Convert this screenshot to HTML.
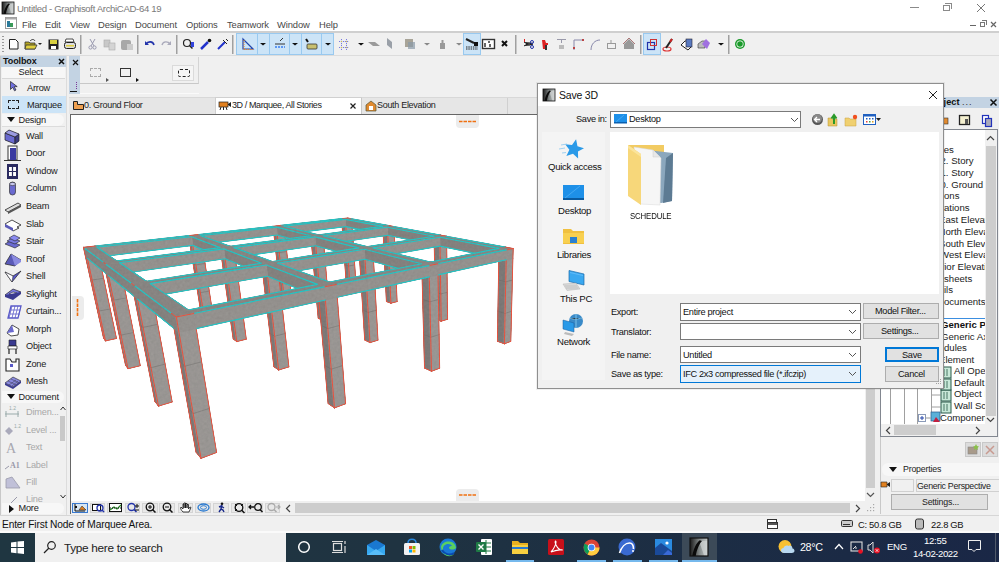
<!DOCTYPE html>
<html><head><meta charset="utf-8">
<style>
*{box-sizing:border-box;margin:0;padding:0}
html,body{width:999px;height:562px;overflow:hidden;background:#f0f0f0;font-family:"Liberation Sans",sans-serif;font-size:11px;color:#000;position:relative}
.a{position:absolute}
.t{position:absolute;white-space:nowrap;line-height:1}
svg{overflow:visible}
</style></head><body>
<!-- title bar -->
<div class="a" style="left:0;top:0;width:999px;height:16px;background:#fff"></div>
<svg class="a" style="left:2px;top:2px" width="12" height="12" viewBox="0 0 12 12"><defs><linearGradient id="LGt" x1="0" x2="1"><stop offset="0" stop-color="#1a1a1a"/><stop offset=".55" stop-color="#8a9090"/><stop offset="1" stop-color="#c8cccc"/></linearGradient></defs><rect width="12" height="12" fill="url(#LGt)"/><path d="M6 2 L9.5 12 L12 12 L12 2Z" fill="#d8dcdc" opacity=".6"/><path d="M1.5 12 C2.5 7 4 3.5 6.5 1.5 L8 2 C6 4 4.5 8 3.8 12Z" fill="#0a0a0a"/><rect width="12" height="12" fill="none" stroke="#111" stroke-width=".8"/></svg>
<div class="t" style="left:17px;top:4px;font-size:9.6px;color:#7a7a7a;letter-spacing:-0.35px">Untitled - Graphisoft ArchiCAD-64 19</div>
<div class="a" style="left:910px;top:7px;width:9px;height:1px;background:#8a8a8a"></div>
<div class="a" style="left:943px;top:5px;width:7px;height:6px;border:1px solid #8a8a8a"></div>
<div class="a" style="left:945px;top:3px;width:7px;height:6px;border-top:1px solid #8a8a8a;border-right:1px solid #8a8a8a"></div>
<svg class="a" style="left:976px;top:3px" width="10" height="10"><path d="M1 1L9 9M9 1L1 9" stroke="#777" stroke-width="1"/></svg>
<!-- menu bar -->
<div class="a" style="left:0;top:16px;width:999px;height:16px;background:#fff"></div>
<svg class="a" style="left:5px;top:17px" width="12" height="12"><rect x="0.5" y="0.5" width="11" height="11" fill="#fff" stroke="#999"/><rect x="0.5" y="0.5" width="11" height="2" fill="#aaa"/><rect x="2" y="4" width="3" height="6" fill="#2b7a9a"/><rect x="5" y="6" width="3" height="4" fill="#3a9a5a"/></svg>
<div class="t" style="left:22px;top:19.5px;font-size:9.4px;color:#484848;letter-spacing:-0.1px">File</div>
<div class="t" style="left:45px;top:19.5px;font-size:9.4px;color:#484848;letter-spacing:-0.1px">Edit</div>
<div class="t" style="left:70px;top:19.5px;font-size:9.4px;color:#484848;letter-spacing:-0.1px">View</div>
<div class="t" style="left:98px;top:19.5px;font-size:9.4px;color:#484848;letter-spacing:-0.1px">Design</div>
<div class="t" style="left:135px;top:19.5px;font-size:9.4px;color:#484848;letter-spacing:-0.1px">Document</div>
<div class="t" style="left:186px;top:19.5px;font-size:9.4px;color:#484848;letter-spacing:-0.1px">Options</div>
<div class="t" style="left:227px;top:19.5px;font-size:9.4px;color:#484848;letter-spacing:-0.1px">Teamwork</div>
<div class="t" style="left:277px;top:19.5px;font-size:9.4px;color:#484848;letter-spacing:-0.1px">Window</div>
<div class="t" style="left:319px;top:19.5px;font-size:9.4px;color:#484848;letter-spacing:-0.1px">Help</div>
<div class="a" style="left:970px;top:25px;width:6px;height:1px;background:#666"></div>
<div class="a" style="left:980px;top:22px;width:5px;height:5px;border:1px solid #777"></div>
<div class="a" style="left:982px;top:20px;width:5px;height:5px;border-top:1px solid #777;border-right:1px solid #777"></div>
<svg class="a" style="left:990px;top:21px" width="7" height="7"><path d="M1 1L6 6M6 1L1 6" stroke="#666" stroke-width="1.2"/></svg>
<div class="a" style="left:0;top:31px;width:999px;height:2px;background:#cfcfcf"></div>
<svg class="a" style="left:0;top:33px" width="760" height="22" viewBox="0 33 760 22">
<g fill="#9a9a9a"><rect x="2" y="36" width="2" height="1"/><rect x="2" y="39" width="2" height="1"/><rect x="2" y="42" width="2" height="1"/><rect x="2" y="45" width="2" height="1"/><rect x="2" y="48" width="2" height="1"/><rect x="2" y="51" width="2" height="1"/></g>
<!-- new -->
<path d="M9.5 39.5h6l2.5 2.5v7h-8.5z" fill="#fff" stroke="#222"/>
<!-- open -->
<path d="M25 42h4l1 1h5v6H25z" fill="#b5a520" stroke="#333" stroke-width=".8"/><path d="M26 45h11l-2 4H25z" fill="#e0d040" stroke="#333" stroke-width=".8"/><path d="M30 41c2-2 4-2 5 0" stroke="#333" fill="none"/><path d="M38 43h4l-2 2z" fill="#222"/>
<!-- save -->
<rect x="48.5" y="39.5" width="10" height="10" fill="#222"/><rect x="50" y="40" width="7" height="4" fill="#d8d040"/><rect x="51" y="46" width="5" height="3" fill="#fff"/>
<!-- print -->
<path d="M66 39h7l1 3h-9z" fill="#fff" stroke="#222" stroke-width=".8"/><rect x="64.5" y="42.5" width="11" height="6" rx="2" fill="#ddd" stroke="#222"/><rect x="66" y="45" width="8" height="1.5" fill="#e0d040"/>
<rect x="80" y="35" width="1.5" height="19" fill="#a0a0a0"/>
<!-- cut -->
<path d="M90 39l4 7M95 39l-4 7" stroke="#9a9ab0" stroke-width="1"/><circle cx="90.5" cy="47.5" r="1.6" fill="none" stroke="#9a9ab0"/><circle cx="94.5" cy="47.5" r="1.6" fill="none" stroke="#9a9ab0"/>
<!-- copy -->
<rect x="104" y="40" width="6" height="7" fill="#c8c8c8" stroke="#aaa" stroke-width=".6"/><rect x="109" y="43" width="6" height="7" fill="#d4d4d4" stroke="#aaa" stroke-width=".6"/>
<!-- paste -->
<rect x="121" y="40" width="10" height="10" rx="2" fill="#a8a8a8"/><rect x="127" y="44" width="6" height="6" fill="#ccc"/>
<rect x="137" y="35" width="1.5" height="19" fill="#a0a0a0"/>
<!-- undo redo -->
<path d="M146 44c2-3 7-3 8 1" stroke="#2233aa" stroke-width="1.6" fill="none"/><path d="M145 41v4h4z" fill="#2233aa"/>
<path d="M170 44c-2-3-7-3-8 1" stroke="#aab" stroke-width="1.4" fill="none"/><path d="M171 41v4h-4z" fill="#aab"/>
<rect x="176" y="35" width="1.5" height="19" fill="#a0a0a0"/>
<!-- zoom -->
<circle cx="187" cy="43" r="3.5" fill="none" stroke="#222" stroke-width="1.2"/><path d="M189.5 45.5l3 3" stroke="#222" stroke-width="1.5"/><rect x="191" y="42" width="3" height="5" fill="#3344dd"/>
<!-- eyedropper -->
<path d="M201 49l7-7" stroke="#2233cc" stroke-width="2.5"/><circle cx="209.5" cy="40.5" r="1.8" fill="#111"/>
<path d="M218 49l7-7" stroke="#2233cc" stroke-width="2"/><path d="M223 40l4 4M226 39l2 2" stroke="#222" stroke-width="1"/>
<rect x="232" y="35" width="1.5" height="19" fill="#a0a0a0"/>
<!-- highlighted group -->
<rect x="236.5" y="33.5" width="97" height="21" fill="#cce4f7" stroke="#99c9ef"/>
<path d="M257.5 34v20M269.5 34v20M289.5 34v20M301.5 34v20M321.5 34v20" stroke="#99c9ef"/>
<path d="M243 39v10h10z" fill="none" stroke="#2244aa" stroke-width="1.2"/><path d="M244 40v9" stroke="#ee8822" stroke-dasharray="1 1"/><path d="M244 49.5h10" stroke="#ee8822" stroke-dasharray="1 1"/>
<path d="M260 43h6l-3 2.5z" fill="#111"/>
<path d="M275 44h10M280 41l3-3" stroke="#333"/><path d="M275 47h10" stroke="#3a7ef0" stroke-width="1.3" stroke-dasharray="2 1"/>
<path d="M292 43h6l-3 2.5z" fill="#111"/>
<path d="M306 39l2 3" stroke="#111" stroke-width="2"/><rect x="307" y="44" width="10" height="5" rx="1" fill="#c8c070" stroke="#333" stroke-width=".8"/>
<path d="M325 43h6l-3 2.5z" fill="#111"/>
<!-- grid -->
<path d="M341.5 39v11M346.5 39v11M339 41.5h10M339 47.5h10" stroke="#7a7ae0" stroke-width="1" stroke-dasharray="1.2 .8"/><g fill="#d8c840"><rect x="341" y="41" width="1" height="1"/><rect x="346" y="41" width="1" height="1"/><rect x="341" y="47" width="1" height="1"/><rect x="346" y="47" width="1" height="1"/></g>
<path d="M358 43h6l-3 2.5z" fill="#111"/>
<path d="M368 42h7l5 4h-7z" fill="#9a9a9a"/>
<path d="M387 38l5 4v7l-5-4z" fill="#9aa0a8"/>
<rect x="405" y="39" width="8" height="8" fill="#a8a498"/><rect x="408" y="42" width="7" height="7" fill="#8a9aa8" opacity=".7"/>
<path d="M424 43h6l-3 2.5z" fill="#888"/>
<rect x="440" y="43" width="5" height="6" fill="#999"/><rect x="441.5" y="40" width="2" height="3" fill="#999"/>
<path d="M456 43h6l-3 2.5z" fill="#888"/>
<rect x="463.5" y="33.5" width="17" height="21" fill="#cce4f7" stroke="#99c9ef"/>
<path d="M466 39l8 4" stroke="#222" stroke-width="2"/><path d="M466 47h12M466 49h12" stroke="#222" stroke-dasharray="1.5 .8"/><rect x="474" y="42" width="4" height="4" fill="#111"/>
<!-- table -->
<rect x="482.5" y="39.5" width="12" height="9" fill="#fff" stroke="#333" stroke-width="1.4"/><path d="M485 43v4M488 42h2M490 44v3" stroke="#333" stroke-width="1.5"/>
<path d="M502 41l5 5M507 41l-5 5" stroke="#111" stroke-width="2"/>
<rect x="515" y="35" width="1.5" height="19" fill="#a0a0a0"/>
<path d="M524 46l5-3 4 2M524 42l5 3 4-2" stroke="#222" stroke-width="1"/><circle cx="532" cy="42" r="1.5" fill="none" stroke="#2233aa"/><circle cx="532" cy="47" r="1.5" fill="none" stroke="#2233aa"/><rect x="524" y="39" width="1" height="3" fill="#d22"/>
<path d="M542 40h3l1 3h2v2h-2v4h-3z" fill="#d22"/><rect x="545" y="45" width="2" height="5" fill="#333"/>
<path d="M557 39.5h9M561.5 40v3" stroke="#99a"/><rect x="559" y="45" width="5" height="4" fill="#bbb"/>
<path d="M574 50v-10h9" stroke="#88a" fill="none"/><rect x="573" y="47" width="2" height="2" fill="#b44"/><rect x="582" y="39" width="2" height="2" fill="#b44"/>
<path d="M591 50c0-6 4-10 9-10" stroke="#88a" fill="none"/>
<rect x="607.5" y="43.5" width="8" height="5" fill="none" stroke="#999"/><path d="M611 40v3" stroke="#999"/>
<path d="M624 44l5-5 5 5v5h-10z" fill="#999"/><path d="M623 44l6-6 6 6" stroke="#a77" fill="none"/>
<rect x="640" y="35" width="1.5" height="19" fill="#a0a0a0"/>
<rect x="643.5" y="33.5" width="17" height="21" fill="#cce4f7" stroke="#99c9ef"/>
<rect x="647.5" y="42.5" width="7" height="7" fill="none" stroke="#2233aa" stroke-width="1.2"/><rect x="650.5" y="39.5" width="6" height="6" fill="none" stroke="#c33"/>
<ellipse cx="667" cy="49" rx="4" ry="2" fill="none" stroke="#d33" stroke-width="1.2"/><path d="M666 48l6-9" stroke="#222" stroke-width="2"/><path d="M670 42l2-3" stroke="#c22" stroke-width="2"/>
<path d="M681 45l4-4h6v6l-3 3z" fill="#fff" stroke="#222"/><rect x="686" y="39" width="6" height="8" fill="#5a7ac0" stroke="#223" stroke-width=".6"/>
<path d="M698 44l4-3h3v7h-7z" fill="#bbb" stroke="#333" stroke-width=".6"/><path d="M702 44l4-5 4 4-3 6z" fill="#a070e0"/>
<path d="M718 43h6l-3 2.5z" fill="#111"/>
<rect x="728" y="35" width="1.5" height="19" fill="#a0a0a0"/>
<circle cx="740" cy="44" r="5" fill="#1a9a2a"/><circle cx="740" cy="44" r="3.5" fill="#fff"/><circle cx="740" cy="44" r="2.8" fill="#1a9a2a"/>
</svg>
<div class="a" style="left:0;top:55px;width:999px;height:1px;background:#dcdcdc"></div>
<div class="a" style="left:0;top:56px;width:66px;height:459px;background:#f0f0f0"></div>
<div class="a" style="left:0;top:56px;width:1px;height:459px;background:#c8c8c8"></div>
<div class="a" style="left:1px;top:56px;width:65px;height:11px;background:#c3d3e3"></div>
<div class="t" style="left:3px;top:57px;font-size:9px;font-weight:bold;color:#111;letter-spacing:-0.1px">Toolbox</div>
<svg class="a" style="left:58px;top:58px" width="7" height="7"><path d="M1 1L6 6M6 1L1 6" stroke="#111" stroke-width="1.5"/></svg>
<div class="a" style="left:2px;top:67px;width:63px;height:11px;background:#f7f7f7"></div>
<div class="t" style="left:18.5px;top:68px;font-size:9.2px;color:#222;letter-spacing:-0.2px">Select</div>
<div class="a" style="left:2px;top:78px;width:63px;height:1px;background:#d8d8d8"></div>
<svg class="a" style="left:10px;top:81px" width="8" height="11"><path d="M.5.5v8l2.2-2.2 1.8 3.5 1.5-.8-1.8-3.4h3z" fill="#7070e0" stroke="#222" stroke-width=".7"/></svg>
<div class="t" style="left:27px;top:84px;font-size:9.2px;color:#222;letter-spacing:-0.2px">Arrow</div>
<div class="a" style="left:2px;top:96px;width:64px;height:17px;background:#cce4f7"></div>
<div class="a" style="left:8px;top:100px;width:11px;height:9px;border:1.3px dashed #222"></div>
<div class="t" style="left:27px;top:101px;font-size:9.2px;color:#222;letter-spacing:-0.2px">Marquee</div>
<div class="a" style="left:2px;top:114px;width:62px;height:12px;background:#f7f7f7;border-radius:0 6px 6px 0"></div>
<svg class="a" style="left:7px;top:117px" width="8" height="6"><path d="M0 0h8l-4 5z" fill="#111"/></svg>
<div class="t" style="left:18.5px;top:115.5px;font-size:9.2px;color:#222;letter-spacing:-0.2px">Design</div>
<div class="a" style="left:2px;top:126px;width:63px;height:1px;background:#dcdcdc"></div>
<svg class="a" style="left:4px;top:128px" width="18" height="17"><path d="M1 5l4-3 10 4v7l-4 3-10-4z" fill="#5a5ab0"/><path d="M1 5l10 4v7l-10-4z" fill="#6a6ad0" stroke="#222" stroke-width=".7"/><path d="M11 9l4-3v7l-4 3z" fill="#3a3a80" stroke="#222" stroke-width=".7"/><path d="M1 5l4-3 10 4-4 3z" fill="#9a9ae0" stroke="#222" stroke-width=".7"/></svg>
<div class="t" style="left:26px;top:131.5px;font-size:9.2px;color:#222;letter-spacing:-0.2px">Wall</div>
<svg class="a" style="left:4px;top:145px" width="18" height="17"><rect x="4" y="1" width="9" height="14" fill="#fff" stroke="#333"/><rect x="6" y="3" width="6" height="12" fill="#3a3aa0"/><path d="M0 15.5h17" stroke="#333"/></svg>
<div class="t" style="left:26px;top:148.5px;font-size:9.2px;color:#222;letter-spacing:-0.2px">Door</div>
<svg class="a" style="left:4px;top:163px" width="18" height="17"><rect x="3" y="1" width="11" height="15" fill="#2a2a60"/><rect x="5" y="4" width="7" height="9" fill="#fff"/><path d="M8.5 4v9M5 8.5h7" stroke="#2a2a60" stroke-width="1.2"/></svg>
<div class="t" style="left:26px;top:166.5px;font-size:9.2px;color:#222;letter-spacing:-0.2px">Window</div>
<svg class="a" style="left:4px;top:180px" width="18" height="17"><rect x="5.5" y="2" width="6" height="13" rx="3" fill="#6a6ad0" stroke="#333" stroke-width=".7"/><ellipse cx="8.5" cy="4" rx="3" ry="1.6" fill="#c8c8f0" stroke="#333" stroke-width=".6"/></svg>
<div class="t" style="left:26px;top:183.5px;font-size:9.2px;color:#222;letter-spacing:-0.2px">Column</div>
<svg class="a" style="left:4px;top:198px" width="18" height="17"><path d="M1 12l13-7 3 2-13 7z" fill="#ddd" stroke="#222" stroke-width=".8"/><path d="M4 14l13-7v2L4 16z" fill="#555"/></svg>
<div class="t" style="left:26px;top:201.5px;font-size:9.2px;color:#222;letter-spacing:-0.2px">Beam</div>
<svg class="a" style="left:4px;top:216px" width="18" height="17"><path d="M1 8l7-4 9 5-4 2 2 1-6 3z" fill="#fff" stroke="#222" stroke-width=".8"/><path d="M1 8v3l8 4v-3z" fill="#5a5ab8"/></svg>
<div class="t" style="left:26px;top:219.5px;font-size:9.2px;color:#222;letter-spacing:-0.2px">Slab</div>
<svg class="a" style="left:4px;top:233px" width="18" height="17"><path d="M1 11l5-3 10 4-5 3z" fill="#6a6ad0" stroke="#222" stroke-width=".6"/><path d="M3 8l5-3 8 3-5 3z" fill="#7a7ae0" stroke="#222" stroke-width=".6"/><path d="M5 5l5-3 6 3-5 3z" fill="#8a8af0" stroke="#222" stroke-width=".6"/></svg>
<div class="t" style="left:26px;top:236.5px;font-size:9.2px;color:#222;letter-spacing:-0.2px">Stair</div>
<svg class="a" style="left:4px;top:251px" width="18" height="17"><path d="M1 13l6-10 10 6-6 6z" fill="#5a5ab8" stroke="#222" stroke-width=".7"/><path d="M7 3l10 6 0 2-6 4z" fill="#8a8ae0"/></svg>
<div class="t" style="left:26px;top:254.5px;font-size:9.2px;color:#222;letter-spacing:-0.2px">Roof</div>
<svg class="a" style="left:4px;top:268px" width="18" height="17"><path d="M1 4l7 10 9-11-8 5z" fill="#5a5ac8" stroke="#222" stroke-width=".7"/><path d="M1 4l8 4-1 6z" fill="#fff" stroke="#222" stroke-width=".5"/></svg>
<div class="t" style="left:26px;top:271.5px;font-size:9.2px;color:#222;letter-spacing:-0.2px">Shell</div>
<svg class="a" style="left:4px;top:286px" width="18" height="17"><path d="M1 9l8-6 8 3-8 6z" fill="#7a7ae0" stroke="#222" stroke-width=".7"/><path d="M5 8l4-2 4 1-4 2z" fill="#fff" stroke="#222" stroke-width=".6"/><path d="M1 9v2l8 3 8-6v-2" fill="#3a3a90"/></svg>
<div class="t" style="left:26px;top:289.5px;font-size:9.2px;color:#222;letter-spacing:-0.2px">Skylight</div>
<svg class="a" style="left:4px;top:303px" width="18" height="17"><path d="M4 15l3-12h10l-3 12z" fill="#fff" stroke="#5a5ac8" stroke-width="1.3"/><path d="M6 11h10M6.5 7h10M8 3l-3 12M11 3l-3 12M14 3l-3 12" stroke="#5a5ac8" stroke-width=".8"/></svg>
<div class="t" style="left:26px;top:306.5px;font-size:9.2px;color:#222;letter-spacing:-0.2px">Curtain...</div>
<svg class="a" style="left:4px;top:321px" width="18" height="17"><path d="M3 12l5-8 7 4-1 6-7 1z" fill="#fff" stroke="#222" stroke-width=".8"/><path d="M3 12l5-8 2 7z" fill="#6a6ad0"/></svg>
<div class="t" style="left:26px;top:324.5px;font-size:9.2px;color:#222;letter-spacing:-0.2px">Morph</div>
<svg class="a" style="left:4px;top:338px" width="18" height="17"><path d="M5 2h7v6H5z" fill="#3a3a90" stroke="#222" stroke-width=".6"/><path d="M4 8h9v3H4z" fill="#fff" stroke="#222" stroke-width=".7"/><path d="M5 11v5M12 11v5" stroke="#222" stroke-width="1.2"/></svg>
<div class="t" style="left:26px;top:341.5px;font-size:9.2px;color:#222;letter-spacing:-0.2px">Object</div>
<svg class="a" style="left:4px;top:356px" width="18" height="17"><path d="M2 3h4l2 3h4V3h3v12H2z" fill="#fff" stroke="#222" stroke-width="1.1"/><rect x="6" y="8" width="3" height="3" fill="#5a5ac8"/></svg>
<div class="t" style="left:26px;top:359.5px;font-size:9.2px;color:#222;letter-spacing:-0.2px">Zone</div>
<svg class="a" style="left:4px;top:373px" width="18" height="17"><path d="M1 10l8-6 8 4-8 6z" fill="#8a8ae0" stroke="#222" stroke-width=".6"/><path d="M4 8l8 4M7 6l8 4M5 12l7-5M8 13l6-5" stroke="#222" stroke-width=".4"/><path d="M1 10v2l8 4 8-6v-2l-8 6z" fill="#3a3a90"/></svg>
<div class="t" style="left:26px;top:376.5px;font-size:9.2px;color:#222;letter-spacing:-0.2px">Mesh</div>
<div class="a" style="left:2px;top:391px;width:62px;height:12px;background:#f7f7f7;border-radius:0 6px 6px 0"></div>
<svg class="a" style="left:7px;top:394px" width="8" height="6"><path d="M0 0h8l-4 5z" fill="#111"/></svg>
<div class="t" style="left:18.5px;top:392.5px;font-size:9.2px;color:#222;letter-spacing:-0.2px">Document</div>
<div class="a" style="left:2px;top:403px;width:63px;height:100px;overflow:hidden">
<svg class="a" style="left:2px;top:1px" width="18" height="17"><path d="M1 10h14M2 7v6M14 7v6" stroke="#9aa" stroke-width="1"/><text x="5" y="6" font-size="5" fill="#9aa" font-family="Liberation Sans">1.2</text></svg>
<div class="t" style="left:24px;top:4.5px;font-size:9.2px;color:#a8a8a8;letter-spacing:-0.2px">Dimen...</div>
<svg class="a" style="left:2px;top:19px" width="18" height="17"><path d="M5 5l4 4-4 4-4-4z" fill="#aab" /><text x="10" y="6" font-size="5" fill="#9aa" font-family="Liberation Sans">1.2</text></svg>
<div class="t" style="left:24px;top:22.5px;font-size:9.2px;color:#a8a8a8;letter-spacing:-0.2px">Level ...</div>
<svg class="a" style="left:2px;top:36px" width="18" height="17"><text x="2" y="14" font-size="14" fill="#a8a8b0" font-family="Liberation Serif">A</text></svg>
<div class="t" style="left:24px;top:39.5px;font-size:9.2px;color:#a8a8a8;letter-spacing:-0.2px">Text</div>
<svg class="a" style="left:2px;top:54px" width="18" height="17"><path d="M1 12l4-3" stroke="#99a"/><text x="6" y="11" font-size="8" font-weight="bold" fill="#99a" font-family="Liberation Serif">A1</text></svg>
<div class="t" style="left:24px;top:57.5px;font-size:9.2px;color:#a8a8a8;letter-spacing:-0.2px">Label</div>
<svg class="a" style="left:2px;top:71px" width="18" height="17"><path d="M2 14V5l6-2 8 11z" fill="#c0c0d8" stroke="#99a" stroke-width=".8"/></svg>
<div class="t" style="left:24px;top:74.5px;font-size:9.2px;color:#a8a8a8;letter-spacing:-0.2px">Fill</div>
<svg class="a" style="left:2px;top:88px" width="18" height="17"><path d="M3 16l10-10" stroke="#99a" stroke-width="1"/></svg>
<div class="t" style="left:24px;top:91.5px;font-size:9.2px;color:#a8a8a8;letter-spacing:-0.2px">Line</div>
</div>
<svg class="a" style="left:60px;top:406px" width="6" height="5"><path d="M.5 4L3 1l2.5 3" stroke="#333" fill="none"/></svg>
<div class="a" style="left:60px;top:416px;width:5px;height:25px;background:#c8c8c8"></div>
<svg class="a" style="left:60px;top:494px" width="6" height="5"><path d="M.5 1L3 4l2.5-3" stroke="#333" fill="none"/></svg>
<div class="a" style="left:2px;top:503px;width:62px;height:11px;background:#f7f7f7;border-radius:0 6px 6px 0"></div>
<svg class="a" style="left:9px;top:505px" width="6" height="8"><path d="M0 0v8l5-4z" fill="#111"/></svg>
<div class="t" style="left:18.5px;top:504px;font-size:9.2px;color:#222;letter-spacing:-0.2px">More</div>
<div class="a" style="left:66px;top:56px;width:1px;height:459px;background:#dcdcdc"></div><div class="a" style="left:69px;top:56px;width:130px;height:38px;background:#f0f0f0;border-bottom:1px solid #fafafa"></div>
<div class="a" style="left:69px;top:56px;width:11px;height:38px;background:#c3d3e3"></div>
<svg class="a" style="left:72px;top:59px" width="7" height="7"><path d="M1 1L6 6M6 1L1 6" stroke="#111" stroke-width="1.2"/></svg>
<div class="a" style="left:76px;top:82px;width:1px;height:7px;border-left:1px dotted #7a3a9a"></div>
<div class="a" style="left:70px;top:91px;width:7px;height:1px;background:#111"></div>
<div class="a" style="left:80px;top:57px;width:119px;height:27px;border-right:1px solid #d4d4d4;border-bottom:1px solid #c8c8c8"></div>
<div class="a" style="left:90px;top:68px;width:11px;height:9px;border:1px dashed #aaa"></div>
<svg class="a" style="left:106px;top:78px" width="4" height="5"><path d="M0 0v4l3-2z" fill="#555"/></svg>
<div class="a" style="left:120px;top:68px;width:11px;height:9px;border:1px solid #333"></div>
<svg class="a" style="left:136px;top:78px" width="4" height="5"><path d="M0 0v4l3-2z" fill="#111"/></svg>
<div class="a" style="left:172px;top:65px;width:22px;height:16px;background:#f5f5f5;border:1px solid #dadada"></div>
<div class="a" style="left:178px;top:69px;width:12px;height:8px;border:1.3px dashed #222;border-radius:2px"></div>
<!-- tabs -->
<div class="a" style="left:69px;top:97px;width:468px;height:17px;background:#e6e6e6;border-top:1px solid #d8d8d8"></div>
<div class="a" style="left:215px;top:97px;width:147px;height:17px;background:#fff;border:1px solid #d0d0d0;border-bottom:none"></div>
<div class="a" style="left:361px;top:98px;width:1px;height:16px;background:#c8c8c8"></div>
<div class="a" style="left:507px;top:98px;width:1px;height:16px;background:#d0d0d0"></div>
<svg class="a" style="left:73px;top:101px" width="11" height="9"><path d="M.5.5h4v3h6v5H.5z" fill="#f0a050" stroke="#222"/></svg>
<div class="t" style="left:84px;top:101px;font-size:9px;color:#222;letter-spacing:-0.3px">0. Ground Floor</div>
<svg class="a" style="left:219px;top:101px" width="12" height="10"><rect x="0" y="1" width="9" height="5" fill="#e08020" stroke="#222" stroke-width=".7"/><path d="M9 3l3-2v5l-3-2z" fill="#222"/><path d="M2 6l-1 3M4.5 6v3M7 6l1 3" stroke="#222"/></svg>
<div class="t" style="left:232px;top:101px;font-size:9px;color:#222;letter-spacing:-0.4px">3D / Marquee, All Stories</div>
<svg class="a" style="left:350px;top:103px" width="6" height="6"><path d="M.5.5l5 5M5.5.5l-5 5" stroke="#222" stroke-width="1.2"/></svg>
<svg class="a" style="left:365px;top:100px" width="12" height="11"><path d="M1 5l5-4 5 4v6H1z" fill="#e08a30" stroke="#553" stroke-width=".7"/><rect x="4" y="6" width="4" height="4" fill="#fff"/></svg>
<div class="t" style="left:377px;top:101px;font-size:9px;color:#222;letter-spacing:-0.3px">South Elevation</div>
<div class="a" style="left:69px;top:114px;width:807px;height:401px;background:#f0f0f0"></div>
<div class="a" style="left:70px;top:114px;width:806px;height:1px;background:#666"></div>
<div class="a" style="left:70px;top:114px;width:1px;height:400px;background:#666"></div>
<div class="a" style="left:71px;top:115px;width:794px;height:386px;background:#fff"></div>
<!-- vertical scrollbar -->
<div class="a" style="left:865px;top:115px;width:11px;height:386px;background:#f0f0f0"></div>
<div class="a" style="left:866px;top:126px;width:9px;height:362px;background:#cdcdcd"></div>
<svg class="a" style="left:866px;top:492px" width="9" height="6"><path d="M1 1l3.5 3.5L8 1" stroke="#555" stroke-width="1.2" fill="none"/></svg>
<!-- bottom toolbar + h scrollbar -->
<div class="a" style="left:71px;top:501px;width:805px;height:13px;background:#f0f0f0"></div>
<div class="a" style="left:295px;top:503px;width:555px;height:10px;background:#cdcdcd"></div>
<svg class="a" style="left:285px;top:504px" width="6" height="9"><path d="M5 1L1.5 4.5 5 8" stroke="#444" stroke-width="1.2" fill="none"/></svg>
<svg class="a" style="left:855px;top:504px" width="6" height="9"><path d="M1 1l3.5 3.5L1 8" stroke="#444" stroke-width="1.2" fill="none"/></svg>
<!-- orange markers -->
<div class="a" style="left:456px;top:115px;width:23px;height:12.5px;background:#ececec;border-radius:0 0 4px 4px"></div>
<svg class="a" style="left:456px;top:115px" width="23" height="12"><path d="M3 6.5h18" stroke="#f07010" stroke-width="1.6" stroke-dasharray="3.5 1"/></svg>
<div class="a" style="left:456px;top:489px;width:23px;height:12px;background:#ececec;border-radius:4px 4px 0 0"></div>
<svg class="a" style="left:456px;top:489px" width="23" height="12"><path d="M3 6h18" stroke="#f07010" stroke-width="1.6" stroke-dasharray="3.5 1"/></svg>
<div class="a" style="left:72px;top:296px;width:12px;height:24px;background:#ececec;border-radius:0 4px 4px 0"></div>
<svg class="a" style="left:72px;top:296px" width="12" height="24"><path d="M5.5 3v18" stroke="#f07010" stroke-width="1.6" stroke-dasharray="3.5 1"/></svg>
<svg class="a" style="left:867px;top:504px" width="8" height="8"><g fill="#a8a8a8"><rect x="6" y="0" width="1.2" height="1.2"/><rect x="3" y="3" width="1.2" height="1.2"/><rect x="6" y="3" width="1.2" height="1.2"/><rect x="0" y="6" width="1.2" height="1.2"/><rect x="3" y="6" width="1.2" height="1.2"/><rect x="6" y="6" width="1.2" height="1.2"/></g></svg>
<svg class="a" style="left:0;top:0" width="999" height="562" viewBox="0 0 999 562"><defs><clipPath id="vc"><rect x="71" y="115" width="794" height="386"/></clipPath><filter id="tex" filterUnits="userSpaceOnUse" x="71" y="115" width="794" height="386"><feTurbulence type="fractalNoise" baseFrequency="0.35" numOctaves="2" seed="7" result="n"/><feColorMatrix in="n" type="matrix" values="0.33 0.33 0.33 0 0  0.33 0.33 0.33 0 0  0.33 0.33 0.33 0 0  0 0 0 0 1" result="g"/><feComposite in="SourceGraphic" in2="g" operator="arithmetic" k1="0.35" k2="0.83" k3="0" k4="0" result="m"/><feComposite in="m" in2="SourceGraphic" operator="in"/></filter></defs><g clip-path="url(#vc)"><g filter="url(#tex)" stroke-linecap="round"><polygon points="201.0,458.4 196.0,452.2 174.0,328.5 179.0,332.5" fill="#7b7876" stroke="#7b7876" stroke-width="0.9" stroke-linejoin="round"/><polygon points="201.0,458.4 216.6,452.5 196.2,328.6 179.0,332.5" fill="#989592" stroke="#989592" stroke-width="0.9" stroke-linejoin="round"/><path d="M193.2 413.6L209.3 408.4" stroke="#6a6764" stroke-opacity=".55" stroke-width=".8"/><path d="M193.2 413.6L188.2 408.2" stroke="#6a6764" stroke-opacity=".55" stroke-width=".8"/><path d="M184.9 366.2L201.7 361.8" stroke="#6a6764" stroke-opacity=".55" stroke-width=".8"/><path d="M184.9 366.2L179.9 361.6" stroke="#6a6764" stroke-opacity=".55" stroke-width=".8"/><path d="M196.0 452.2L174.0 328.5" stroke="#e8503c" stroke-width="1.0"/><path d="M201.0 458.4L179.0 332.5" stroke="#e8503c" stroke-width="1.0"/><path d="M216.6 452.5L196.2 328.6" stroke="#e8503c" stroke-width="1.0"/><path d="M196.0 452.2L201.0 458.4" stroke="#e8503c" stroke-width="1.0"/><path d="M201.0 458.4L216.6 452.5" stroke="#e8503c" stroke-width="1.0"/><polygon points="105.5,340.9 103.6,338.4 85.5,256.9 87.4,258.4" fill="#7b7876" stroke="#7b7876" stroke-width="0.9" stroke-linejoin="round"/><polygon points="105.5,340.9 116.5,338.5 99.1,257.0 87.4,258.4" fill="#989592" stroke="#989592" stroke-width="0.9" stroke-linejoin="round"/><path d="M98.9 311.0L110.2 309.0" stroke="#6a6764" stroke-opacity=".55" stroke-width=".8"/><path d="M98.9 311.0L97.0 308.9" stroke="#6a6764" stroke-opacity=".55" stroke-width=".8"/><path d="M92.1 280.0L103.6 278.3" stroke="#6a6764" stroke-opacity=".55" stroke-width=".8"/><path d="M92.1 280.0L90.2 278.3" stroke="#6a6764" stroke-opacity=".55" stroke-width=".8"/><path d="M103.6 338.4L85.5 256.9" stroke="#e8503c" stroke-width="1.0"/><path d="M105.5 340.9L87.4 258.4" stroke="#e8503c" stroke-width="1.0"/><path d="M116.5 338.5L99.1 257.0" stroke="#e8503c" stroke-width="1.0"/><path d="M103.6 338.4L105.5 340.9" stroke="#e8503c" stroke-width="1.0"/><path d="M105.5 340.9L116.5 338.5" stroke="#e8503c" stroke-width="1.0"/><polygon points="128.1,368.7 125.6,365.5 106.1,273.6 108.5,275.6" fill="#7b7876" stroke="#7b7876" stroke-width="0.9" stroke-linejoin="round"/><polygon points="128.1,368.7 140.3,365.7 121.7,273.7 108.5,275.6" fill="#989592" stroke="#989592" stroke-width="0.9" stroke-linejoin="round"/><path d="M121.1 335.1L133.6 332.5" stroke="#6a6764" stroke-opacity=".55" stroke-width=".8"/><path d="M121.1 335.1L118.6 332.4" stroke="#6a6764" stroke-opacity=".55" stroke-width=".8"/><path d="M113.7 300.1L126.6 297.9" stroke="#6a6764" stroke-opacity=".55" stroke-width=".8"/><path d="M113.7 300.1L111.2 297.8" stroke="#6a6764" stroke-opacity=".55" stroke-width=".8"/><path d="M125.6 365.5L106.1 273.6" stroke="#e8503c" stroke-width="1.0"/><path d="M128.1 368.7L108.5 275.6" stroke="#e8503c" stroke-width="1.0"/><path d="M140.3 365.7L121.7 273.7" stroke="#e8503c" stroke-width="1.0"/><path d="M125.6 365.5L128.1 368.7" stroke="#e8503c" stroke-width="1.0"/><path d="M128.1 368.7L140.3 365.7" stroke="#e8503c" stroke-width="1.0"/><polygon points="158.5,406.1 155.0,401.8 134.2,296.3 137.5,299.0" fill="#7b7876" stroke="#7b7876" stroke-width="0.9" stroke-linejoin="round"/><polygon points="158.5,406.1 172.2,402.0 152.5,296.4 137.5,299.0" fill="#989592" stroke="#989592" stroke-width="0.9" stroke-linejoin="round"/><path d="M151.0 367.7L165.1 364.1" stroke="#6a6764" stroke-opacity=".55" stroke-width=".8"/><path d="M151.0 367.7L147.5 363.9" stroke="#6a6764" stroke-opacity=".55" stroke-width=".8"/><path d="M143.1 327.4L157.7 324.3" stroke="#6a6764" stroke-opacity=".55" stroke-width=".8"/><path d="M143.1 327.4L139.7 324.2" stroke="#6a6764" stroke-opacity=".55" stroke-width=".8"/><path d="M155.0 401.8L134.2 296.3" stroke="#e8503c" stroke-width="1.0"/><path d="M158.5 406.1L137.5 299.0" stroke="#e8503c" stroke-width="1.0"/><path d="M172.2 402.0L152.5 296.4" stroke="#e8503c" stroke-width="1.0"/><path d="M155.0 401.8L158.5 406.1" stroke="#e8503c" stroke-width="1.0"/><path d="M158.5 406.1L172.2 402.0" stroke="#e8503c" stroke-width="1.0"/><polygon points="204.6,319.7 201.7,317.8 190.0,244.3 192.8,245.4" fill="#7b7876" stroke="#7b7876" stroke-width="0.9" stroke-linejoin="round"/><polygon points="204.6,319.7 213.4,317.8 202.1,244.3 192.8,245.4" fill="#989592" stroke="#989592" stroke-width="0.9" stroke-linejoin="round"/><path d="M200.3 292.7L209.3 291.1" stroke="#6a6764" stroke-opacity=".55" stroke-width=".8"/><path d="M200.3 292.7L197.5 291.0" stroke="#6a6764" stroke-opacity=".55" stroke-width=".8"/><path d="M195.9 264.8L205.0 263.5" stroke="#6a6764" stroke-opacity=".55" stroke-width=".8"/><path d="M195.9 264.8L193.0 263.4" stroke="#6a6764" stroke-opacity=".55" stroke-width=".8"/><path d="M201.7 317.8L190.0 244.3" stroke="#e8503c" stroke-width="1.0"/><path d="M204.6 319.7L192.8 245.4" stroke="#e8503c" stroke-width="1.0"/><path d="M213.4 317.8L202.1 244.3" stroke="#e8503c" stroke-width="1.0"/><path d="M201.7 317.8L204.6 319.7" stroke="#e8503c" stroke-width="1.0"/><path d="M204.6 319.7L213.4 317.8" stroke="#e8503c" stroke-width="1.0"/><polygon points="322.4,320.3 318.2,318.3 311.6,244.5 315.8,245.7" fill="#7b7876" stroke="#7b7876" stroke-width="0.9" stroke-linejoin="round"/><polygon points="322.4,320.3 330.0,318.4 323.8,244.5 315.8,245.7" fill="#989592" stroke="#989592" stroke-width="0.9" stroke-linejoin="round"/><path d="M320.0 293.1L327.7 291.5" stroke="#6a6764" stroke-opacity=".55" stroke-width=".8"/><path d="M320.0 293.1L315.8 291.5" stroke="#6a6764" stroke-opacity=".55" stroke-width=".8"/><path d="M317.6 265.1L325.4 263.8" stroke="#6a6764" stroke-opacity=".55" stroke-width=".8"/><path d="M317.6 265.1L313.3 263.7" stroke="#6a6764" stroke-opacity=".55" stroke-width=".8"/><path d="M318.2 318.3L311.6 244.5" stroke="#e8503c" stroke-width="1.0"/><path d="M322.4 320.3L315.8 245.7" stroke="#e8503c" stroke-width="1.0"/><path d="M330.0 318.4L323.8 244.5" stroke="#e8503c" stroke-width="1.0"/><path d="M318.2 318.3L322.4 320.3" stroke="#e8503c" stroke-width="1.0"/><path d="M322.4 320.3L330.0 318.4" stroke="#e8503c" stroke-width="1.0"/><polygon points="334.5,407.9 328.1,403.6 318.7,297.2 325.4,300.0" fill="#7b7876" stroke="#7b7876" stroke-width="0.9" stroke-linejoin="round"/><polygon points="334.5,407.9 345.6,403.8 337.3,297.3 325.4,300.0" fill="#989592" stroke="#989592" stroke-width="0.9" stroke-linejoin="round"/><path d="M331.2 369.2L342.6 365.6" stroke="#6a6764" stroke-opacity=".55" stroke-width=".8"/><path d="M331.2 369.2L324.7 365.4" stroke="#6a6764" stroke-opacity=".55" stroke-width=".8"/><path d="M327.8 328.6L339.5 325.5" stroke="#6a6764" stroke-opacity=".55" stroke-width=".8"/><path d="M327.8 328.6L321.2 325.4" stroke="#6a6764" stroke-opacity=".55" stroke-width=".8"/><path d="M328.1 403.6L318.7 297.2" stroke="#e8503c" stroke-width="1.0"/><path d="M334.5 407.9L325.4 300.0" stroke="#e8503c" stroke-width="1.0"/><path d="M345.6 403.8L337.3 297.3" stroke="#e8503c" stroke-width="1.0"/><path d="M328.1 403.6L334.5 407.9" stroke="#e8503c" stroke-width="1.0"/><path d="M334.5 407.9L345.6 403.8" stroke="#e8503c" stroke-width="1.0"/><polygon points="441.2,321.2 435.7,319.2 434.2,244.9 440.0,246.1" fill="#7b7876" stroke="#7b7876" stroke-width="0.9" stroke-linejoin="round"/><polygon points="441.2,321.2 447.6,319.3 446.7,244.9 440.0,246.1" fill="#989592" stroke="#989592" stroke-width="0.9" stroke-linejoin="round"/><path d="M440.8 293.9L447.3 292.3" stroke="#6a6764" stroke-opacity=".55" stroke-width=".8"/><path d="M440.8 293.9L435.2 292.2" stroke="#6a6764" stroke-opacity=".55" stroke-width=".8"/><path d="M440.3 265.7L446.9 264.3" stroke="#6a6764" stroke-opacity=".55" stroke-width=".8"/><path d="M440.3 265.7L434.6 264.3" stroke="#6a6764" stroke-opacity=".55" stroke-width=".8"/><path d="M435.7 319.2L434.2 244.9" stroke="#e8503c" stroke-width="1.0"/><path d="M441.2 321.2L440.0 246.1" stroke="#e8503c" stroke-width="1.0"/><path d="M447.6 319.3L446.7 244.9" stroke="#e8503c" stroke-width="1.0"/><path d="M435.7 319.2L441.2 321.2" stroke="#e8503c" stroke-width="1.0"/><path d="M441.2 321.2L447.6 319.3" stroke="#e8503c" stroke-width="1.0"/><polygon points="431.5,371.3 424.5,368.1 422.0,274.9 429.3,276.9" fill="#7b7876" stroke="#7b7876" stroke-width="0.9" stroke-linejoin="round"/><polygon points="431.5,371.3 439.7,368.2 438.0,274.9 429.3,276.9" fill="#989592" stroke="#989592" stroke-width="0.9" stroke-linejoin="round"/><path d="M430.7 337.3L439.1 334.6" stroke="#6a6764" stroke-opacity=".55" stroke-width=".8"/><path d="M430.7 337.3L423.6 334.5" stroke="#6a6764" stroke-opacity=".55" stroke-width=".8"/><path d="M429.9 301.8L438.5 299.5" stroke="#6a6764" stroke-opacity=".55" stroke-width=".8"/><path d="M429.9 301.8L422.7 299.4" stroke="#6a6764" stroke-opacity=".55" stroke-width=".8"/><path d="M424.5 368.1L422.0 274.9" stroke="#e8503c" stroke-width="1.0"/><path d="M431.5 371.3L429.3 276.9" stroke="#e8503c" stroke-width="1.0"/><path d="M439.7 368.2L438.0 274.9" stroke="#e8503c" stroke-width="1.0"/><path d="M424.5 368.1L431.5 371.3" stroke="#e8503c" stroke-width="1.0"/><path d="M431.5 371.3L439.7 368.2" stroke="#e8503c" stroke-width="1.0"/><polygon points="504.4,343.8 497.4,341.3 498.8,258.3 506.2,259.8" fill="#7b7876" stroke="#7b7876" stroke-width="0.9" stroke-linejoin="round"/><polygon points="504.4,343.8 510.8,341.4 512.9,258.3 506.2,259.8" fill="#989592" stroke="#989592" stroke-width="0.9" stroke-linejoin="round"/><path d="M505.0 313.4L511.6 311.3" stroke="#6a6764" stroke-opacity=".55" stroke-width=".8"/><path d="M505.0 313.4L497.9 311.2" stroke="#6a6764" stroke-opacity=".55" stroke-width=".8"/><path d="M505.7 281.8L512.4 280.1" stroke="#6a6764" stroke-opacity=".55" stroke-width=".8"/><path d="M505.7 281.8L498.4 280.0" stroke="#6a6764" stroke-opacity=".55" stroke-width=".8"/><path d="M497.4 341.3L498.8 258.3" stroke="#e8503c" stroke-width="1.0"/><path d="M504.4 343.8L506.2 259.8" stroke="#e8503c" stroke-width="1.0"/><path d="M510.8 341.4L512.9 258.3" stroke="#e8503c" stroke-width="1.0"/><path d="M497.4 341.3L504.4 343.8" stroke="#e8503c" stroke-width="1.0"/><path d="M504.4 343.8L510.8 341.4" stroke="#e8503c" stroke-width="1.0"/><polygon points="390.9,303.2 386.4,301.6 383.2,234.3 387.8,235.3" fill="#7b7876" stroke="#7b7876" stroke-width="0.9" stroke-linejoin="round"/><polygon points="390.9,303.2 397.1,301.6 394.3,234.3 387.8,235.3" fill="#989592" stroke="#989592" stroke-width="0.9" stroke-linejoin="round"/><path d="M389.8 278.4L396.1 277.1" stroke="#6a6764" stroke-opacity=".55" stroke-width=".8"/><path d="M389.8 278.4L385.2 277.1" stroke="#6a6764" stroke-opacity=".55" stroke-width=".8"/><path d="M388.6 252.9L395.0 251.8" stroke="#6a6764" stroke-opacity=".55" stroke-width=".8"/><path d="M388.6 252.9L384.0 251.8" stroke="#6a6764" stroke-opacity=".55" stroke-width=".8"/><path d="M386.4 301.6L383.2 234.3" stroke="#e8503c" stroke-width="1.0"/><path d="M390.9 303.2L387.8 235.3" stroke="#e8503c" stroke-width="1.0"/><path d="M397.1 301.6L394.3 234.3" stroke="#e8503c" stroke-width="1.0"/><path d="M386.4 301.6L390.9 303.2" stroke="#e8503c" stroke-width="1.0"/><path d="M390.9 303.2L397.1 301.6" stroke="#e8503c" stroke-width="1.0"/><polygon points="350.2,288.6 346.5,287.3 342.1,225.8 345.9,226.6" fill="#7b7876" stroke="#7b7876" stroke-width="0.9" stroke-linejoin="round"/><polygon points="350.2,288.6 356.2,287.3 352.1,225.8 345.9,226.6" fill="#989592" stroke="#989592" stroke-width="0.9" stroke-linejoin="round"/><path d="M348.6 266.0L354.7 264.9" stroke="#6a6764" stroke-opacity=".55" stroke-width=".8"/><path d="M348.6 266.0L344.9 264.8" stroke="#6a6764" stroke-opacity=".55" stroke-width=".8"/><path d="M347.0 242.7L353.2 241.8" stroke="#6a6764" stroke-opacity=".55" stroke-width=".8"/><path d="M347.0 242.7L343.2 241.8" stroke="#6a6764" stroke-opacity=".55" stroke-width=".8"/><path d="M346.5 287.3L342.1 225.8" stroke="#e8503c" stroke-width="1.0"/><path d="M350.2 288.6L345.9 226.6" stroke="#e8503c" stroke-width="1.0"/><path d="M356.2 287.3L352.1 225.8" stroke="#e8503c" stroke-width="1.0"/><path d="M346.5 287.3L350.2 288.6" stroke="#e8503c" stroke-width="1.0"/><path d="M350.2 288.6L356.2 287.3" stroke="#e8503c" stroke-width="1.0"/><polygon points="345.4,219.4 351.7,218.7 347.8,218.0 341.6,218.6" fill="#878481" stroke="#878481" stroke-width="0.9" stroke-linejoin="round"/><path d="M351.7 218.7L347.8 218.0" stroke="#e8503c" stroke-width="1.0"/><path d="M341.6 218.6L347.8 218.0" stroke="#e8503c" stroke-width="1.0"/><polygon points="382.8,226.4 389.3,225.6 351.7,218.7 345.4,219.4" fill="#878481" stroke="#878481" stroke-width="0.9" stroke-linejoin="round"/><polygon points="383.2,234.3 345.9,226.6 345.4,219.4 382.8,226.4" fill="#83807d" stroke="#83807d" stroke-width="0.9" stroke-linejoin="round"/><path d="M382.8 226.4L345.4 219.4" stroke="#22c4c4" stroke-width="1.15"/><path d="M389.3 225.6L351.7 218.7" stroke="#22c4c4" stroke-width="1.15"/><path d="M383.2 234.3L345.9 226.6" stroke="#22c4c4" stroke-width="1.15"/><polygon points="387.4,227.3 393.9,226.5 389.3,225.6 382.8,226.4" fill="#878481" stroke="#878481" stroke-width="0.9" stroke-linejoin="round"/><path d="M393.9 226.5L389.3 225.6" stroke="#e8503c" stroke-width="1.0"/><polygon points="434.1,236.2 440.7,235.1 393.9,226.5 387.4,227.3" fill="#878481" stroke="#878481" stroke-width="0.9" stroke-linejoin="round"/><polygon points="434.2,244.9 387.8,235.3 387.4,227.3 434.1,236.2" fill="#83807d" stroke="#83807d" stroke-width="0.9" stroke-linejoin="round"/><path d="M434.1 236.2L387.4 227.3" stroke="#22c4c4" stroke-width="1.15"/><path d="M440.7 235.1L393.9 226.5" stroke="#22c4c4" stroke-width="1.15"/><path d="M434.2 244.9L387.8 235.3" stroke="#22c4c4" stroke-width="1.15"/><polygon points="439.9,237.3 446.5,236.2 440.7,235.1 434.1,236.2" fill="#878481" stroke="#878481" stroke-width="0.9" stroke-linejoin="round"/><path d="M446.5 236.2L440.7 235.1" stroke="#e8503c" stroke-width="1.0"/><polygon points="499.0,248.4 505.7,247.1 446.5,236.2 439.9,237.3" fill="#878481" stroke="#878481" stroke-width="0.9" stroke-linejoin="round"/><polygon points="498.8,258.3 440.0,246.1 439.9,237.3 499.0,248.4" fill="#83807d" stroke="#83807d" stroke-width="0.9" stroke-linejoin="round"/><path d="M499.0 248.4L439.9 237.3" stroke="#22c4c4" stroke-width="1.15"/><path d="M505.7 247.1L446.5 236.2" stroke="#22c4c4" stroke-width="1.15"/><path d="M498.8 258.3L440.0 246.1" stroke="#22c4c4" stroke-width="1.15"/><polygon points="506.4,249.9 513.2,248.5 505.7,247.1 499.0,248.4" fill="#878481" stroke="#878481" stroke-width="0.9" stroke-linejoin="round"/><polygon points="506.2,259.8 512.9,258.3 513.2,248.5 506.4,249.9" fill="#93908d" stroke="#93908d" stroke-width="0.9" stroke-linejoin="round"/><path d="M513.2 248.5L505.7 247.1" stroke="#e8503c" stroke-width="1.0"/><path d="M506.4 249.9L513.2 248.5" stroke="#e8503c" stroke-width="1.0"/><path d="M512.9 258.3L513.2 248.5" stroke="#e8503c" stroke-width="1.0"/><polygon points="284.0,226.3 345.4,219.4 341.6,218.6 280.5,225.4" fill="#878481" stroke="#878481" stroke-width="0.9" stroke-linejoin="round"/><polygon points="284.9,234.1 345.9,226.6 345.4,219.4 284.0,226.3" fill="#93908d" stroke="#93908d" stroke-width="0.9" stroke-linejoin="round"/><path d="M284.0 226.3L345.4 219.4" stroke="#22c4c4" stroke-width="1.15"/><path d="M280.5 225.4L341.6 218.6" stroke="#22c4c4" stroke-width="1.15"/><path d="M284.9 234.1L345.9 226.6" stroke="#22c4c4" stroke-width="1.15"/><polygon points="323.1,235.8 387.4,227.3 382.8,226.4 318.7,234.8" fill="#878481" stroke="#878481" stroke-width="0.9" stroke-linejoin="round"/><polygon points="323.8,244.5 387.8,235.3 387.4,227.3 323.1,235.8" fill="#93908d" stroke="#93908d" stroke-width="0.9" stroke-linejoin="round"/><path d="M323.1 235.8L387.4 227.3" stroke="#22c4c4" stroke-width="1.15"/><path d="M318.7 234.8L382.8 226.4" stroke="#22c4c4" stroke-width="1.15"/><path d="M323.8 244.5L387.8 235.3" stroke="#22c4c4" stroke-width="1.15"/><polygon points="372.9,248.0 439.9,237.3 434.1,236.2 367.3,246.6" fill="#878481" stroke="#878481" stroke-width="0.9" stroke-linejoin="round"/><polygon points="373.4,257.7 440.0,246.1 439.9,237.3 372.9,248.0" fill="#93908d" stroke="#93908d" stroke-width="0.9" stroke-linejoin="round"/><path d="M372.9 248.0L439.9 237.3" stroke="#22c4c4" stroke-width="1.15"/><path d="M367.3 246.6L434.1 236.2" stroke="#22c4c4" stroke-width="1.15"/><path d="M373.4 257.7L440.0 246.1" stroke="#22c4c4" stroke-width="1.15"/><polygon points="437.8,263.8 506.4,249.9 499.0,248.4 430.5,262.0" fill="#878481" stroke="#878481" stroke-width="0.9" stroke-linejoin="round"/><polygon points="438.0,274.9 506.2,259.8 506.4,249.9 437.8,263.8" fill="#93908d" stroke="#93908d" stroke-width="0.9" stroke-linejoin="round"/><path d="M437.8 263.8L506.4 249.9" stroke="#22c4c4" stroke-width="1.15"/><path d="M430.5 262.0L499.0 248.4" stroke="#22c4c4" stroke-width="1.15"/><path d="M438.0 274.9L506.2 259.8" stroke="#22c4c4" stroke-width="1.15"/><polygon points="370.0,342.6 364.7,340.1 359.5,257.7 365.0,259.2" fill="#7b7876" stroke="#7b7876" stroke-width="0.9" stroke-linejoin="round"/><polygon points="370.0,342.6 378.0,340.2 373.4,257.7 365.0,259.2" fill="#989592" stroke="#989592" stroke-width="0.9" stroke-linejoin="round"/><path d="M368.2 312.4L376.3 310.3" stroke="#6a6764" stroke-opacity=".55" stroke-width=".8"/><path d="M368.2 312.4L362.9 310.2" stroke="#6a6764" stroke-opacity=".55" stroke-width=".8"/><path d="M366.3 281.1L374.6 279.3" stroke="#6a6764" stroke-opacity=".55" stroke-width=".8"/><path d="M366.3 281.1L360.9 279.3" stroke="#6a6764" stroke-opacity=".55" stroke-width=".8"/><path d="M364.7 340.1L359.5 257.7" stroke="#e8503c" stroke-width="1.0"/><path d="M370.0 342.6L365.0 259.2" stroke="#e8503c" stroke-width="1.0"/><path d="M378.0 340.2L373.4 257.7" stroke="#e8503c" stroke-width="1.0"/><path d="M364.7 340.1L370.0 342.6" stroke="#e8503c" stroke-width="1.0"/><path d="M370.0 342.6L378.0 340.2" stroke="#e8503c" stroke-width="1.0"/><polygon points="284.7,302.6 281.3,301.0 273.9,234.1 277.3,235.0" fill="#7b7876" stroke="#7b7876" stroke-width="0.9" stroke-linejoin="round"/><polygon points="284.7,302.6 291.9,301.1 284.9,234.1 277.3,235.0" fill="#989592" stroke="#989592" stroke-width="0.9" stroke-linejoin="round"/><path d="M282.0 278.0L289.3 276.7" stroke="#6a6764" stroke-opacity=".55" stroke-width=".8"/><path d="M282.0 278.0L278.6 276.6" stroke="#6a6764" stroke-opacity=".55" stroke-width=".8"/><path d="M279.2 252.6L286.7 251.5" stroke="#6a6764" stroke-opacity=".55" stroke-width=".8"/><path d="M279.2 252.6L275.8 251.5" stroke="#6a6764" stroke-opacity=".55" stroke-width=".8"/><path d="M281.3 301.0L273.9 234.1" stroke="#e8503c" stroke-width="1.0"/><path d="M284.7 302.6L277.3 235.0" stroke="#e8503c" stroke-width="1.0"/><path d="M291.9 301.1L284.9 234.1" stroke="#e8503c" stroke-width="1.0"/><path d="M281.3 301.0L284.7 302.6" stroke="#e8503c" stroke-width="1.0"/><path d="M284.7 302.6L291.9 301.1" stroke="#e8503c" stroke-width="1.0"/><polygon points="276.5,227.1 284.0,226.3 280.5,225.4 273.0,226.3" fill="#878481" stroke="#878481" stroke-width="0.9" stroke-linejoin="round"/><path d="M273.0 226.3L280.5 225.4" stroke="#e8503c" stroke-width="1.0"/><polygon points="310.8,235.8 318.7,234.8 284.0,226.3 276.5,227.1" fill="#878481" stroke="#878481" stroke-width="0.9" stroke-linejoin="round"/><polygon points="311.6,244.5 277.3,235.0 276.5,227.1 310.8,235.8" fill="#83807d" stroke="#83807d" stroke-width="0.9" stroke-linejoin="round"/><path d="M310.8 235.8L276.5 227.1" stroke="#22c4c4" stroke-width="1.15"/><path d="M318.7 234.8L284.0 226.3" stroke="#22c4c4" stroke-width="1.15"/><path d="M311.6 244.5L277.3 235.0" stroke="#22c4c4" stroke-width="1.15"/><polygon points="315.1,236.9 323.1,235.8 318.7,234.8 310.8,235.8" fill="#878481" stroke="#878481" stroke-width="0.9" stroke-linejoin="round"/><polygon points="358.9,247.9 367.3,246.6 323.1,235.8 315.1,236.9" fill="#878481" stroke="#878481" stroke-width="0.9" stroke-linejoin="round"/><polygon points="359.5,257.7 315.8,245.7 315.1,236.9 358.9,247.9" fill="#83807d" stroke="#83807d" stroke-width="0.9" stroke-linejoin="round"/><path d="M358.9 247.9L315.1 236.9" stroke="#22c4c4" stroke-width="1.15"/><path d="M367.3 246.6L323.1 235.8" stroke="#22c4c4" stroke-width="1.15"/><path d="M359.5 257.7L315.8 245.7" stroke="#22c4c4" stroke-width="1.15"/><polygon points="364.4,249.3 372.9,248.0 367.3,246.6 358.9,247.9" fill="#878481" stroke="#878481" stroke-width="0.9" stroke-linejoin="round"/><polygon points="421.7,263.8 430.5,262.0 372.9,248.0 364.4,249.3" fill="#878481" stroke="#878481" stroke-width="0.9" stroke-linejoin="round"/><polygon points="422.0,274.9 365.0,259.2 364.4,249.3 421.7,263.8" fill="#83807d" stroke="#83807d" stroke-width="0.9" stroke-linejoin="round"/><path d="M421.7 263.8L364.4 249.3" stroke="#22c4c4" stroke-width="1.15"/><path d="M430.5 262.0L372.9 248.0" stroke="#22c4c4" stroke-width="1.15"/><path d="M422.0 274.9L365.0 259.2" stroke="#22c4c4" stroke-width="1.15"/><polygon points="429.0,265.6 437.8,263.8 430.5,262.0 421.7,263.8" fill="#878481" stroke="#878481" stroke-width="0.9" stroke-linejoin="round"/><polygon points="429.3,276.9 438.0,274.9 437.8,263.8 429.0,265.6" fill="#93908d" stroke="#93908d" stroke-width="0.9" stroke-linejoin="round"/><path d="M429.0 265.6L437.8 263.8" stroke="#e8503c" stroke-width="1.0"/><polygon points="200.8,235.7 276.5,227.1 273.0,226.3 197.9,234.6" fill="#878481" stroke="#878481" stroke-width="0.9" stroke-linejoin="round"/><polygon points="202.1,244.3 277.3,235.0 276.5,227.1 200.8,235.7" fill="#93908d" stroke="#93908d" stroke-width="0.9" stroke-linejoin="round"/><path d="M200.8 235.7L276.5 227.1" stroke="#22c4c4" stroke-width="1.15"/><path d="M197.9 234.6L273.0 226.3" stroke="#22c4c4" stroke-width="1.15"/><path d="M202.1 244.3L277.3 235.0" stroke="#22c4c4" stroke-width="1.15"/><polygon points="233.9,247.6 315.1,236.9 310.8,235.8 230.2,246.2" fill="#878481" stroke="#878481" stroke-width="0.9" stroke-linejoin="round"/><polygon points="235.2,257.3 315.8,245.7 315.1,236.9 233.9,247.6" fill="#93908d" stroke="#93908d" stroke-width="0.9" stroke-linejoin="round"/><path d="M233.9 247.6L315.1 236.9" stroke="#22c4c4" stroke-width="1.15"/><path d="M230.2 246.2L310.8 235.8" stroke="#22c4c4" stroke-width="1.15"/><path d="M235.2 257.3L315.8 245.7" stroke="#22c4c4" stroke-width="1.15"/><polygon points="277.4,263.3 364.4,249.3 358.9,247.9 272.5,261.5" fill="#878481" stroke="#878481" stroke-width="0.9" stroke-linejoin="round"/><polygon points="278.6,274.3 365.0,259.2 364.4,249.3 277.4,263.3" fill="#93908d" stroke="#93908d" stroke-width="0.9" stroke-linejoin="round"/><path d="M277.4 263.3L364.4 249.3" stroke="#22c4c4" stroke-width="1.15"/><path d="M272.5 261.5L358.9 247.9" stroke="#22c4c4" stroke-width="1.15"/><path d="M278.6 274.3L365.0 259.2" stroke="#22c4c4" stroke-width="1.15"/><polygon points="336.3,284.5 429.0,265.6 421.7,263.8 329.5,282.0" fill="#878481" stroke="#878481" stroke-width="0.9" stroke-linejoin="round"/><polygon points="337.3,297.3 429.3,276.9 429.0,265.6 336.3,284.5" fill="#93908d" stroke="#93908d" stroke-width="0.9" stroke-linejoin="round"/><path d="M336.3 284.5L429.0 265.6" stroke="#22c4c4" stroke-width="1.15"/><path d="M329.5 282.0L421.7 263.8" stroke="#22c4c4" stroke-width="1.15"/><path d="M337.3 297.3L429.3 276.9" stroke="#22c4c4" stroke-width="1.15"/><polygon points="278.7,370.0 273.9,366.8 262.8,274.2 267.6,276.2" fill="#7b7876" stroke="#7b7876" stroke-width="0.9" stroke-linejoin="round"/><polygon points="278.7,370.0 288.9,366.9 278.6,274.3 267.6,276.2" fill="#989592" stroke="#989592" stroke-width="0.9" stroke-linejoin="round"/><path d="M274.7 336.2L285.2 333.5" stroke="#6a6764" stroke-opacity=".55" stroke-width=".8"/><path d="M274.7 336.2L269.9 333.4" stroke="#6a6764" stroke-opacity=".55" stroke-width=".8"/><path d="M270.5 300.9L281.3 298.7" stroke="#6a6764" stroke-opacity=".55" stroke-width=".8"/><path d="M270.5 300.9L265.8 298.6" stroke="#6a6764" stroke-opacity=".55" stroke-width=".8"/><path d="M273.9 366.8L262.8 274.2" stroke="#e8503c" stroke-width="1.0"/><path d="M278.7 370.0L267.6 276.2" stroke="#e8503c" stroke-width="1.0"/><path d="M288.9 366.9L278.6 274.3" stroke="#e8503c" stroke-width="1.0"/><path d="M273.9 366.8L278.7 370.0" stroke="#e8503c" stroke-width="1.0"/><path d="M278.7 370.0L288.9 366.9" stroke="#e8503c" stroke-width="1.0"/><polygon points="236.8,341.6 233.2,339.1 221.5,257.2 225.1,258.7" fill="#7b7876" stroke="#7b7876" stroke-width="0.9" stroke-linejoin="round"/><polygon points="236.8,341.6 246.3,339.2 235.2,257.3 225.1,258.7" fill="#989592" stroke="#989592" stroke-width="0.9" stroke-linejoin="round"/><path d="M232.6 311.6L242.3 309.5" stroke="#6a6764" stroke-opacity=".55" stroke-width=".8"/><path d="M232.6 311.6L229.0 309.5" stroke="#6a6764" stroke-opacity=".55" stroke-width=".8"/><path d="M228.2 280.5L238.1 278.8" stroke="#6a6764" stroke-opacity=".55" stroke-width=".8"/><path d="M228.2 280.5L224.6 278.7" stroke="#6a6764" stroke-opacity=".55" stroke-width=".8"/><path d="M233.2 339.1L221.5 257.2" stroke="#e8503c" stroke-width="1.0"/><path d="M236.8 341.6L225.1 258.7" stroke="#e8503c" stroke-width="1.0"/><path d="M246.3 339.2L235.2 257.3" stroke="#e8503c" stroke-width="1.0"/><path d="M233.2 339.1L236.8 341.6" stroke="#e8503c" stroke-width="1.0"/><path d="M236.8 341.6L246.3 339.2" stroke="#e8503c" stroke-width="1.0"/><polygon points="191.5,236.7 200.8,235.7 197.9,234.6 188.6,235.6" fill="#878481" stroke="#878481" stroke-width="0.9" stroke-linejoin="round"/><path d="M188.6 235.6L197.9 234.6" stroke="#e8503c" stroke-width="1.0"/><polygon points="220.1,247.6 230.2,246.2 200.8,235.7 191.5,236.7" fill="#878481" stroke="#878481" stroke-width="0.9" stroke-linejoin="round"/><polygon points="221.5,257.2 192.8,245.4 191.5,236.7 220.1,247.6" fill="#83807d" stroke="#83807d" stroke-width="0.9" stroke-linejoin="round"/><path d="M220.1 247.6L191.5 236.7" stroke="#22c4c4" stroke-width="1.15"/><path d="M230.2 246.2L200.8 235.7" stroke="#22c4c4" stroke-width="1.15"/><path d="M221.5 257.2L192.8 245.4" stroke="#22c4c4" stroke-width="1.15"/><polygon points="223.8,248.9 233.9,247.6 230.2,246.2 220.1,247.6" fill="#878481" stroke="#878481" stroke-width="0.9" stroke-linejoin="round"/><polygon points="261.5,263.2 272.5,261.5 233.9,247.6 223.8,248.9" fill="#878481" stroke="#878481" stroke-width="0.9" stroke-linejoin="round"/><polygon points="262.8,274.2 225.1,258.7 223.8,248.9 261.5,263.2" fill="#83807d" stroke="#83807d" stroke-width="0.9" stroke-linejoin="round"/><path d="M261.5 263.2L223.8 248.9" stroke="#22c4c4" stroke-width="1.15"/><path d="M272.5 261.5L233.9 247.6" stroke="#22c4c4" stroke-width="1.15"/><path d="M262.8 274.2L225.1 258.7" stroke="#22c4c4" stroke-width="1.15"/><polygon points="266.3,265.0 277.4,263.3 272.5,261.5 261.5,263.2" fill="#878481" stroke="#878481" stroke-width="0.9" stroke-linejoin="round"/><polygon points="317.5,284.4 329.5,282.0 277.4,263.3 266.3,265.0" fill="#878481" stroke="#878481" stroke-width="0.9" stroke-linejoin="round"/><polygon points="318.7,297.2 267.6,276.2 266.3,265.0 317.5,284.4" fill="#83807d" stroke="#83807d" stroke-width="0.9" stroke-linejoin="round"/><path d="M317.5 284.4L266.3 265.0" stroke="#22c4c4" stroke-width="1.15"/><path d="M329.5 282.0L277.4 263.3" stroke="#22c4c4" stroke-width="1.15"/><path d="M318.7 297.2L267.6 276.2" stroke="#22c4c4" stroke-width="1.15"/><polygon points="324.2,286.9 336.3,284.5 329.5,282.0 317.5,284.4" fill="#878481" stroke="#878481" stroke-width="0.9" stroke-linejoin="round"/><polygon points="325.4,300.0 337.3,297.3 336.3,284.5 324.2,286.9" fill="#93908d" stroke="#93908d" stroke-width="0.9" stroke-linejoin="round"/><path d="M324.2 286.9L336.3 284.5" stroke="#e8503c" stroke-width="1.0"/><polygon points="97.0,247.3 191.5,236.7 188.6,235.6 95.1,246.0" fill="#878481" stroke="#878481" stroke-width="0.9" stroke-linejoin="round"/><polygon points="99.1,257.0 192.8,245.4 191.5,236.7 97.0,247.3" fill="#93908d" stroke="#93908d" stroke-width="0.9" stroke-linejoin="round"/><path d="M97.0 247.3L191.5 236.7" stroke="#22c4c4" stroke-width="1.15"/><path d="M95.1 246.0L188.6 235.6" stroke="#22c4c4" stroke-width="1.15"/><path d="M99.1 257.0L192.8 245.4" stroke="#22c4c4" stroke-width="1.15"/><polygon points="119.5,262.7 223.8,248.9 220.1,247.6 116.9,260.9" fill="#878481" stroke="#878481" stroke-width="0.9" stroke-linejoin="round"/><polygon points="121.7,273.7 225.1,258.7 223.8,248.9 119.5,262.7" fill="#93908d" stroke="#93908d" stroke-width="0.9" stroke-linejoin="round"/><path d="M119.5 262.7L223.8 248.9" stroke="#22c4c4" stroke-width="1.15"/><path d="M116.9 260.9L220.1 247.6" stroke="#22c4c4" stroke-width="1.15"/><path d="M121.7 273.7L225.1 258.7" stroke="#22c4c4" stroke-width="1.15"/><polygon points="150.1,283.6 266.3,265.0 261.5,263.2 146.5,281.2" fill="#878481" stroke="#878481" stroke-width="0.9" stroke-linejoin="round"/><polygon points="152.5,296.4 267.6,276.2 266.3,265.0 150.1,283.6" fill="#93908d" stroke="#93908d" stroke-width="0.9" stroke-linejoin="round"/><path d="M150.1 283.6L266.3 265.0" stroke="#22c4c4" stroke-width="1.15"/><path d="M146.5 281.2L261.5 263.2" stroke="#22c4c4" stroke-width="1.15"/><path d="M152.5 296.4L267.6 276.2" stroke="#22c4c4" stroke-width="1.15"/><polygon points="193.7,313.5 324.2,286.9 317.5,284.4 188.6,309.9" fill="#878481" stroke="#878481" stroke-width="0.9" stroke-linejoin="round"/><polygon points="196.2,328.6 325.4,300.0 324.2,286.9 193.7,313.5" fill="#93908d" stroke="#93908d" stroke-width="0.9" stroke-linejoin="round"/><path d="M193.7 313.5L324.2 286.9" stroke="#22c4c4" stroke-width="1.15"/><path d="M188.6 309.9L317.5 284.4" stroke="#22c4c4" stroke-width="1.15"/><path d="M196.2 328.6L325.4 300.0" stroke="#22c4c4" stroke-width="1.15"/><polygon points="85.2,248.7 97.0,247.3 95.1,246.0 83.4,247.3" fill="#878481" stroke="#878481" stroke-width="0.9" stroke-linejoin="round"/><polygon points="87.4,258.4 85.5,256.9 83.4,247.3 85.2,248.7" fill="#83807d" stroke="#83807d" stroke-width="0.9" stroke-linejoin="round"/><path d="M85.2 248.7L83.4 247.3" stroke="#e8503c" stroke-width="1.0"/><path d="M85.5 256.9L83.4 247.3" stroke="#e8503c" stroke-width="1.0"/><path d="M83.4 247.3L95.1 246.0" stroke="#e8503c" stroke-width="1.0"/><polygon points="103.8,262.6 116.9,260.9 97.0,247.3 85.2,248.7" fill="#878481" stroke="#878481" stroke-width="0.9" stroke-linejoin="round"/><polygon points="106.1,273.6 87.4,258.4 85.2,248.7 103.8,262.6" fill="#83807d" stroke="#83807d" stroke-width="0.9" stroke-linejoin="round"/><path d="M103.8 262.6L85.2 248.7" stroke="#22c4c4" stroke-width="1.15"/><path d="M116.9 260.9L97.0 247.3" stroke="#22c4c4" stroke-width="1.15"/><path d="M106.1 273.6L87.4 258.4" stroke="#22c4c4" stroke-width="1.15"/><polygon points="106.2,264.5 119.5,262.7 116.9,260.9 103.8,262.6" fill="#878481" stroke="#878481" stroke-width="0.9" stroke-linejoin="round"/><polygon points="108.5,275.6 106.1,273.6 103.8,262.6 106.2,264.5" fill="#83807d" stroke="#83807d" stroke-width="0.9" stroke-linejoin="round"/><path d="M106.2 264.5L103.8 262.6" stroke="#e8503c" stroke-width="1.0"/><polygon points="131.6,283.5 146.5,281.2 119.5,262.7 106.2,264.5" fill="#878481" stroke="#878481" stroke-width="0.9" stroke-linejoin="round"/><polygon points="134.2,296.3 108.5,275.6 106.2,264.5 131.6,283.5" fill="#83807d" stroke="#83807d" stroke-width="0.9" stroke-linejoin="round"/><path d="M131.6 283.5L106.2 264.5" stroke="#22c4c4" stroke-width="1.15"/><path d="M146.5 281.2L119.5 262.7" stroke="#22c4c4" stroke-width="1.15"/><path d="M134.2 296.3L108.5 275.6" stroke="#22c4c4" stroke-width="1.15"/><polygon points="135.0,286.0 150.1,283.6 146.5,281.2 131.6,283.5" fill="#878481" stroke="#878481" stroke-width="0.9" stroke-linejoin="round"/><polygon points="137.5,299.0 134.2,296.3 131.6,283.5 135.0,286.0" fill="#83807d" stroke="#83807d" stroke-width="0.9" stroke-linejoin="round"/><path d="M135.0 286.0L131.6 283.5" stroke="#e8503c" stroke-width="1.0"/><polygon points="171.3,313.3 188.6,309.9 150.1,283.6 135.0,286.0" fill="#878481" stroke="#878481" stroke-width="0.9" stroke-linejoin="round"/><polygon points="174.0,328.5 137.5,299.0 135.0,286.0 171.3,313.3" fill="#83807d" stroke="#83807d" stroke-width="0.9" stroke-linejoin="round"/><path d="M171.3 313.3L135.0 286.0" stroke="#22c4c4" stroke-width="1.15"/><path d="M188.6 309.9L150.1 283.6" stroke="#22c4c4" stroke-width="1.15"/><path d="M174.0 328.5L137.5 299.0" stroke="#22c4c4" stroke-width="1.15"/><polygon points="176.3,317.0 193.7,313.5 188.6,309.9 171.3,313.3" fill="#878481" stroke="#878481" stroke-width="0.9" stroke-linejoin="round"/><polygon points="179.0,332.5 174.0,328.5 171.3,313.3 176.3,317.0" fill="#83807d" stroke="#83807d" stroke-width="0.9" stroke-linejoin="round"/><polygon points="179.0,332.5 196.2,328.6 193.7,313.5 176.3,317.0" fill="#93908d" stroke="#93908d" stroke-width="0.9" stroke-linejoin="round"/><path d="M176.3 317.0L171.3 313.3" stroke="#e8503c" stroke-width="1.0"/><path d="M176.3 317.0L193.7 313.5" stroke="#e8503c" stroke-width="1.0"/><path d="M179.0 332.5L176.3 317.0" stroke="#e8503c" stroke-width="1.0"/></g></g></svg><div class="a" style="left:72px;top:502.5px;width:16px;height:10.5px;background:#d8e6f2;border:1px solid #3a7ad0"></div>
<svg class="a" style="left:73px;top:502px" width="15" height="11"><path d="M2 2v7h10" stroke="#111" stroke-width="1" fill="none"/><path d="M6 8l3-4 4 4z" fill="#e08020" stroke="#333" stroke-width=".6"/><rect x="2" y="4" width="2" height="2" fill="#111"/></svg>
<div class="a" style="left:89.5px;top:502.5px;width:15.0px;height:10.5px;background:#e8e8e8;border:1px solid #d4d4d4"></div>
<svg class="a" style="left:90.5px;top:502px" width="15" height="11"><rect x="1.5" y="2.5" width="8" height="6" fill="#fff" stroke="#111"/><circle cx="9" cy="6" r="3" fill="none" stroke="#2233aa" stroke-width="1.3"/><path d="M11 8l2 2" stroke="#2233aa" stroke-width="1.5"/></svg>
<div class="a" style="left:107px;top:502.5px;width:15px;height:10.5px;background:#e8e8e8;border:1px solid #d4d4d4"></div>
<svg class="a" style="left:108px;top:502px" width="15" height="11"><rect x="1.5" y="1.5" width="12" height="8" fill="#fff" stroke="#111"/><path d="M2 8l4-3 3 2 4-4" stroke="#2a8a2a" stroke-width="1.3" fill="none"/><path d="M2 6h11" stroke="#111" stroke-dasharray="1 1"/></svg>
<div class="a" style="left:124.5px;top:502.5px;width:15.5px;height:10.5px;background:#e8e8e8;border:1px solid #d4d4d4"></div>
<svg class="a" style="left:125.5px;top:502px" width="15" height="11"><circle cx="5.5" cy="5" r="3.5" fill="none" stroke="#2233aa" stroke-width="1.3"/><path d="M8 7.5l2.5 2.5" stroke="#2233aa" stroke-width="1.5"/><path d="M11 2v4M9 4h4M9 8h4" stroke="#111"/></svg>
<div class="a" style="left:142px;top:502.5px;width:16px;height:10.5px;background:#e8e8e8;border:1px solid #d4d4d4"></div>
<svg class="a" style="left:143px;top:502px" width="15" height="11"><circle cx="7" cy="5" r="3.8" fill="none" stroke="#111" stroke-width="1.3"/><path d="M9.5 7.5l3 3" stroke="#111" stroke-width="1.5"/><path d="M5 5h4M7 3v4" stroke="#111"/></svg>
<div class="a" style="left:159px;top:502.5px;width:16px;height:10.5px;background:#e8e8e8;border:1px solid #d4d4d4"></div>
<svg class="a" style="left:160px;top:502px" width="15" height="11"><circle cx="7" cy="5" r="3.8" fill="none" stroke="#111" stroke-width="1.3"/><path d="M9.5 7.5l3 3" stroke="#111" stroke-width="1.5"/><path d="M5 5h4" stroke="#111"/></svg>
<div class="a" style="left:177.5px;top:502.5px;width:15.5px;height:10.5px;background:#e8e8e8;border:1px solid #d4d4d4"></div>
<svg class="a" style="left:178.5px;top:502px" width="15" height="11"><path d="M4 10c-2-2-3-4-2-5l2 2V2l1 0v4V1h1.5v5V1.5H8v4.5V2.5h1.5V7l1.5-2 1 .5-2 4.5z" fill="#fff" stroke="#111" stroke-width=".8"/></svg>
<div class="a" style="left:195px;top:502.5px;width:15.5px;height:10.5px;background:#e8e8e8;border:1px solid #d4d4d4"></div>
<svg class="a" style="left:196px;top:502px" width="15" height="11"><ellipse cx="7.5" cy="5.5" rx="5.5" ry="3.5" fill="none" stroke="#2a7ad0" stroke-width="1.3"/><ellipse cx="7.5" cy="5.5" rx="3" ry="1.8" fill="none" stroke="#2a7ad0"/></svg>
<div class="a" style="left:212.5px;top:502.5px;width:16.0px;height:10.5px;background:#e8e8e8;border:1px solid #d4d4d4"></div>
<svg class="a" style="left:213.5px;top:502px" width="15" height="11"><circle cx="8" cy="1.8" r="1.3" fill="#111"/><path d="M8 3l-1 4-2 3M7 7l2 1 1 2M5 5l2-1 3 2" stroke="#1a2a8a" stroke-width="1.4" fill="none"/></svg>
<div class="a" style="left:230.5px;top:502.5px;width:15.5px;height:10.5px;background:#e8e8e8;border:1px solid #d4d4d4"></div>
<svg class="a" style="left:231.5px;top:502px" width="15" height="11"><circle cx="7" cy="5.5" r="3.8" fill="none" stroke="#111" stroke-width="1.3"/><path d="M9.5 8l3 3" stroke="#111" stroke-width="1.5"/><path d="M3 2l2 2M11 2l-2 2M3 9l2-2" stroke="#111"/></svg>
<div class="a" style="left:247px;top:502.5px;width:16px;height:10.5px;background:#e8e8e8;border:1px solid #d4d4d4"></div>
<svg class="a" style="left:248px;top:502px" width="15" height="11"><path d="M1 5h5M3 3l-2 2 2 2" stroke="#111" stroke-width="1.3" fill="none"/><circle cx="10" cy="5" r="3.3" fill="none" stroke="#111" stroke-width="1.3"/><path d="M12 7.5l2.5 2.5" stroke="#111" stroke-width="1.5"/></svg>
<div class="a" style="left:264.5px;top:502.5px;width:15.5px;height:10.5px;background:#e8e8e8;border:1px solid #d4d4d4"></div>
<svg class="a" style="left:265.5px;top:502px" width="15" height="11"><circle cx="5.5" cy="5" r="3.5" fill="none" stroke="#aaa" stroke-width="1.3"/><path d="M8 7.5l2.5 2.5" stroke="#aaa" stroke-width="1.5"/><path d="M10 5h4M12 3l2 2-2 2" stroke="#aaa" stroke-width="1.2" fill="none"/></svg><div class="a" style="left:876px;top:97px;width:123px;height:418px;background:#f0f0f0"></div>
<div class="a" style="left:880px;top:97px;width:1px;height:417px;background:#c8c8c8"></div>
<div class="a" style="left:881px;top:97px;width:118px;height:11px;background:#c3d3e3"></div>
<div class="t" style="left:938px;top:98px;font-size:9.2px;font-weight:bold;color:#111;letter-spacing:0px">oject <span style="font-weight:normal;color:#333;letter-spacing:1px">...</span></div>
<svg class="a" style="left:990px;top:99px" width="7" height="7"><path d="M.5.5l6 6M6.5.5l-6 6" stroke="#111" stroke-width="1.5"/></svg>
<!-- icon row -->
<svg class="a" style="left:940px;top:114px" width="60" height="14">
<rect x="1" y="4" width="7" height="6" fill="#e08a30" stroke="#333" stroke-width=".6"/>
<rect x="19.5" y="1.5" width="10" height="9" fill="#f4f0d0" stroke="#222" stroke-width="1.3"/><rect x="25" y="5" width="3" height="5" fill="#555"/>
<rect x="42.5" y="1.5" width="6" height="8" fill="#fff" stroke="#2233bb" stroke-width="1.2"/><rect x="45.5" y="4.5" width="6" height="8" fill="#aab" stroke="#2233bb" stroke-width="1.2"/>
</svg>
<!-- tree -->
<div class="a" style="left:880px;top:129px;width:118px;height:308px;background:#fff;border:1px solid #828790"></div>
<div class="a" style="left:985px;top:130px;width:12px;height:294px;background:#f0f0f0"></div>
<div class="a" style="left:986px;top:146px;width:10px;height:270px;background:#cdcdcd"></div>
<svg class="a" style="left:986px;top:135px" width="9" height="6"><path d="M1 5l3.5-3.5L8 5" stroke="#444" stroke-width="1.2" fill="none"/></svg>
<svg class="a" style="left:986px;top:417px" width="9" height="6"><path d="M1 1l3.5 3.5L8 1" stroke="#444" stroke-width="1.2" fill="none"/></svg>
<div class="a" style="left:881px;top:424px;width:116px;height:12px;background:#f0f0f0"></div>
<div class="a" style="left:894px;top:425px;width:42px;height:10px;background:#cdcdcd"></div>
<svg class="a" style="left:885px;top:426px" width="6" height="9"><path d="M5 1L1.5 4.5 5 8" stroke="#444" stroke-width="1.2" fill="none"/></svg>
<svg class="a" style="left:975px;top:426px" width="6" height="9"><path d="M1 1l3.5 3.5L1 8" stroke="#444" stroke-width="1.2" fill="none"/></svg>
<div class="a" style="left:881px;top:130px;width:104px;height:294px;overflow:hidden">
<div class="t" style="left:43px;top:15px;font-size:9.6px;color:#222">Stories</div>
<div class="t" style="left:59.5px;top:26px;font-size:9.6px;color:#222">2. Story</div>
<div class="t" style="left:59.5px;top:38px;font-size:9.6px;color:#222">1. Story</div>
<div class="t" style="left:59.5px;top:50px;font-size:9.6px;color:#222">0. Ground Floor</div>
<div class="t" style="left:41.7px;top:61px;font-size:9.6px;color:#222">Sections</div>
<div class="t" style="left:44.3px;top:73px;font-size:9.6px;color:#222">Elevations</div>
<div class="t" style="left:58px;top:85px;font-size:9.6px;color:#222">East Elevation</div>
<div class="t" style="left:57.5px;top:97px;font-size:9.6px;color:#222">North Elevation</div>
<div class="t" style="left:58px;top:109px;font-size:9.6px;color:#222">South Elevation</div>
<div class="t" style="left:59px;top:120px;font-size:9.6px;color:#222">West Elevation</div>
<div class="t" style="left:44px;top:132px;font-size:9.6px;color:#222">Interior Elevations</div>
<div class="t" style="left:40.8px;top:144px;font-size:9.6px;color:#222">Worksheets</div>
<div class="t" style="left:42.7px;top:155px;font-size:9.6px;color:#222">Details</div>
<div class="t" style="left:41.1px;top:167px;font-size:9.6px;color:#222">3D Documents</div>
<div class="a" style="left:0;top:188px;width:104px;height:1px;background:#3b8ee0"></div>
<div class="t" style="left:60px;top:190px;font-size:9.6px;font-weight:bold;color:#111">Generic Perspective</div>
<div class="t" style="left:60px;top:202px;font-size:9.6px;color:#222">Generic Axonometry</div>
<div class="t" style="left:41.1px;top:213px;font-size:9.6px;color:#222">Schedules</div>
<div class="t" style="left:58px;top:225px;font-size:9.6px;color:#222">Element</div>
<div class="t" style="left:73px;top:236px;font-size:9.6px;color:#222">All Openings</div>
<div class="t" style="left:73px;top:248px;font-size:9.6px;color:#222">Default Element List</div>
<div class="t" style="left:73px;top:259px;font-size:9.6px;color:#222">Object Inventory</div>
<div class="t" style="left:73px;top:271px;font-size:9.6px;color:#222">Wall Schedule</div>
<div class="t" style="left:59px;top:283px;font-size:9.6px;color:#222">Component</div>
<svg class="a" style="left:0;top:0" width="104" height="294">
<g stroke="#a0a0a0" stroke-width="1"><path d="M9.5 258v36M23.5 258v36M36.5 258v36M50.5 258v30M50.5 265h9M50.5 277h9"/></g>
<g fill="#3a7a6a"><rect x="60" y="237" width="10" height="11" fill="#c8e8d8" stroke="#2a5a4a"/><rect x="60" y="260" width="10" height="11" fill="#c8e8d8" stroke="#2a5a4a"/><rect x="60" y="272" width="10" height="11" fill="#c8e8d8" stroke="#2a5a4a"/><rect x="60" y="249" width="10" height="11" fill="#c8e8d8" stroke="#2a5a4a"/></g>
<path d="M63 239v7M66 239v7M63 251v7M66 251v7M63 262v7M66 262v7M63 274v7M66 274v7" stroke="#2a5a4a" stroke-width=".8"/>
<rect x="37.5" y="284.5" width="7" height="7" fill="#fff" stroke="#8a9ab8"/><path d="M39 288h4M41 286v4" stroke="#2244aa"/><path d="M44.5 288h5" stroke="#999"/>
<rect x="50" y="282" width="9" height="9" fill="#5ab0d8" stroke="#2a5a8a" stroke-width=".7"/><path d="M52 292l3-5 4 5z" fill="#c02040"/>
</svg>
</div>
<!-- buttons -->
<div class="a" style="left:965px;top:442px;width:16px;height:15px;background:#dcdcdc;border:1px solid #c8c8c8"></div>
<svg class="a" style="left:967px;top:444px" width="12" height="11"><rect x="1" y="3" width="9" height="7" fill="#a89a8a" stroke="#888" stroke-width=".6"/><path d="M9 0l1 2 2 .5-1.5 1.5.5 2-2-1-2 1 .5-2L6 2.5 8 2z" fill="#8ac04a"/></svg>
<div class="a" style="left:982px;top:442px;width:16px;height:15px;background:#dcdcdc;border:1px solid #c8c8c8"></div>
<svg class="a" style="left:985px;top:445px" width="10" height="10"><path d="M1 1l8 8M9 1L1 9" stroke="#c89a90" stroke-width="1.5"/></svg>
<!-- properties -->
<div class="a" style="left:882px;top:463px;width:117px;height:13px;background:#f7f7f7;border-radius:6px 0 0 6px"></div>
<svg class="a" style="left:889px;top:467px" width="9" height="6"><path d="M0 0h8l-4 5z" fill="#111"/></svg>
<div class="t" style="left:903px;top:465px;font-size:8.8px;color:#222;letter-spacing:-0.2px">Properties</div>
<svg class="a" style="left:881px;top:481px" width="9" height="7"><path d="M0 1h6v5H0z" fill="#e08020" stroke="#222" stroke-width=".6"/><path d="M6 3l3-2v5l-3-2z" fill="#222"/></svg>
<div class="a" style="left:891px;top:479px;width:23px;height:13px;background:#f0f0f0;border:1px solid #d0d0d0"></div>
<div class="a" style="left:916px;top:479px;width:83px;height:13px;background:#f0f0f0;border:1px solid #d0d0d0;border-right:none"></div>
<div class="t" style="left:917px;top:481.5px;font-size:8.8px;color:#222;letter-spacing:-0.3px">Generic Perspective</div>
<div class="a" style="left:891px;top:494px;width:97px;height:16px;background:#e1e1e1;border:1px solid #adadad"></div>
<div class="t" style="left:922px;top:498px;font-size:8.8px;color:#222;letter-spacing:-0.2px">Settings...</div>
<div class="a" style="left:0;top:515px;width:999px;height:1px;background:#d6d6d6"></div>
<div class="a" style="left:0;top:516px;width:999px;height:15px;background:#f0f0f0"></div>
<div class="a" style="left:0;top:531px;width:999px;height:2px;background:#fafafa"></div>
<div class="t" style="left:2px;top:519.5px;font-size:10.2px;color:#111;letter-spacing:-0.15px">Enter First Node of Marquee Area.</div>
<svg class="a" style="left:767px;top:519px" width="12" height="11"><rect x=".5" y=".5" width="9" height="4" fill="#fff" stroke="#333"/><rect x=".5" y="3.5" width="10" height="6" fill="#fff" stroke="#333"/><rect x="1" y="4" width="9" height="2" fill="#555"/></svg>
<svg class="a" style="left:841px;top:520px" width="12" height="8"><rect x=".5" y=".5" width="11" height="6" rx="1" fill="#ccc" stroke="#333"/><path d="M2 4.5h7" stroke="#333"/></svg>
<div class="t" style="left:858px;top:520px;font-size:9.4px;color:#111;letter-spacing:-0.3px">C: 50.8 GB</div>
<svg class="a" style="left:915px;top:518px" width="9" height="12"><rect x=".5" y="1" width="8" height="10" rx="2" fill="#bbb" stroke="#333"/></svg>
<div class="t" style="left:931px;top:520px;font-size:9.4px;color:#111;letter-spacing:-0.3px">22.8 GB</div>
<div class="a" style="left:0;top:533px;width:999px;height:29px;background:linear-gradient(90deg,#1f3641 0%,#1f3341 40%,#1c2d44 70%,#1a2746 100%)"></div>
<svg class="a" style="left:11px;top:541px" width="13" height="13"><path d="M0 1.5l5.5-.8v5.3H0zM6.5.6L13 0v6H6.5zM0 7h5.5v5.3L0 11.5zM6.5 7H13v6l-6.5-.7z" fill="#fff"/></svg>
<div class="a" style="left:35px;top:533px;width:251px;height:29px;background:#f0f0f0"></div>
<svg class="a" style="left:43px;top:540px" width="14" height="14"><circle cx="8.5" cy="5.5" r="3.8" fill="none" stroke="#222" stroke-width="1.2"/><path d="M6 8l-5 5" stroke="#222" stroke-width="1.3"/></svg>
<div class="t" style="left:64px;top:542.5px;font-size:11.8px;color:#222;letter-spacing:-0.3px">Type here to search</div>
<svg class="a" style="left:296px;top:539px" width="16" height="16"><circle cx="8" cy="8" r="5.3" fill="none" stroke="#fff" stroke-width="1.5"/></svg>
<svg class="a" style="left:332px;top:540px" width="16" height="16"><rect x="1.5" y="3.5" width="8" height="7" fill="none" stroke="#ddd" stroke-width="1.2"/><path d="M0 1.5h11M0 12.5h11M13 1v3M13 6v7" stroke="#ddd" stroke-width="1.2"/></svg>
<!-- mail -->
<svg class="a" style="left:366px;top:539px" width="20" height="17"><path d="M1 6l9-5 9 5v10H1z" fill="#1a78d0"/><path d="M1 6l9 6 9-6v10H1z" fill="#36a8f0"/><path d="M1 16l9-6 9 6z" fill="#58bdf8"/></svg>
<!-- store -->
<svg class="a" style="left:403px;top:538px" width="18" height="18"><path d="M5 5c0-5 8-5 8 0" stroke="#2a8ae0" stroke-width="1.5" fill="none"/><rect x="1" y="5" width="16" height="12" rx="1.5" fill="#f2f2f2"/><rect x="6" y="8" width="3" height="3" fill="#f25022"/><rect x="9.5" y="8" width="3" height="3" fill="#7fba00"/><rect x="6" y="11.5" width="3" height="3" fill="#00a4ef"/><rect x="9.5" y="11.5" width="3" height="3" fill="#ffb900"/></svg>
<!-- edge -->
<svg class="a" style="left:439px;top:538px" width="18" height="18"><circle cx="9" cy="9" r="8.5" fill="#1a7ad8"/><path d="M2 9c1-7 14-8 15 1-2 2-6 2-7 0 0-2 3-2 3-2-1-3-9-3-9 3 0 5 6 8 11 5-3 4-12 3-13-7z" fill="#5ad060"/><path d="M3 12c2 4 8 6 12 3" stroke="#0a4ab0" stroke-width="2" fill="none"/></svg>
<!-- excel -->
<svg class="a" style="left:475px;top:538px" width="18" height="18"><rect x="6" y="1" width="11" height="16" rx="1" fill="#fff"/><path d="M8 5h8M8 9h8M8 13h8M11 2v14" stroke="#1e7a45" stroke-width="1"/><rect x="1" y="4" width="10" height="10" rx="1" fill="#1e7a45"/><path d="M3.5 6.5l5 5M8.5 6.5l-5 5" stroke="#fff" stroke-width="1.4"/></svg>
<!-- explorer -->
<svg class="a" style="left:511px;top:539px" width="18" height="16"><path d="M1 2h6l2 2h8v11H1z" fill="#e8b020"/><rect x="1" y="6" width="16" height="9" fill="#f8d040"/><rect x="1" y="8" width="16" height="2" fill="#2a7ad0"/></svg>
<div class="a" style="left:506px;top:560px;width:28px;height:2px;background:#76b9ed"></div>
<!-- acrobat -->
<svg class="a" style="left:547px;top:538px" width="18" height="18"><rect x="1" y="1" width="16" height="16" rx="1.5" fill="#c8101a"/><path d="M4 14c3-3 5-8 5-10s-2-1 0 3 4 5 6 5-4-1-11 2z" stroke="#fff" stroke-width="1.1" fill="none"/></svg>
<!-- chrome -->
<svg class="a" style="left:583px;top:539px" width="17" height="17"><circle cx="8.5" cy="8.5" r="8" fill="#db4437"/><path d="M8.5 8.5L1.6 4.5A8 8 0 0 0 4.5 15.4z" fill="#0f9d58"/><path d="M8.5 8.5L4.5 15.4A8 8 0 0 0 16.5 8.5z" fill="#ffcd40"/><circle cx="8.5" cy="8.5" r="3.8" fill="#fff"/><circle cx="8.5" cy="8.5" r="3" fill="#4285f4"/></svg>
<div class="a" style="left:577px;top:560px;width:29px;height:2px;background:#76b9ed"></div>
<!-- blue arc -->
<svg class="a" style="left:618px;top:538px" width="18" height="18"><circle cx="9" cy="9" r="8.5" fill="#3a6ad0"/><path d="M1.5 15c2-6 6-10 10-10 3 0 4 3 4 6" stroke="#fff" stroke-width="1.6" fill="none"/><circle cx="15" cy="13" r="1" fill="#fff"/></svg>
<div class="a" style="left:613px;top:560px;width:29px;height:2px;background:#76b9ed"></div>
<!-- photos -->
<svg class="a" style="left:655px;top:539px" width="17" height="16"><rect x="0" y="0" width="17" height="16" fill="#2a8ae0"/><path d="M0 16V9l6-5 11 8v4z" fill="#1a4a9a"/><path d="M8 16l5-5 4 3v2z" fill="#3a6ad8"/><circle cx="12" cy="4" r="1.6" fill="#fff"/></svg>
<div class="a" style="left:649px;top:560px;width:29px;height:2px;background:#76b9ed"></div>
<!-- archicad active -->
<div class="a" style="left:682px;top:533px;width:35px;height:29px;background:#3c4a58"></div>
<svg class="a" style="left:690px;top:538px" width="18" height="18" viewBox="0 0 12 12"><defs><linearGradient id="LGt" x1="0" x2="1"><stop offset="0" stop-color="#1a1a1a"/><stop offset=".55" stop-color="#8a9090"/><stop offset="1" stop-color="#c8cccc"/></linearGradient></defs><rect width="12" height="12" fill="url(#LGt)"/><path d="M6 2 L9.5 12 L12 12 L12 2Z" fill="#d8dcdc" opacity=".6"/><path d="M1.5 12 C2.5 7 4 3.5 6.5 1.5 L8 2 C6 4 4.5 8 3.8 12Z" fill="#0a0a0a"/><rect width="12" height="12" fill="none" stroke="#111" stroke-width=".8"/></svg>
<div class="a" style="left:682px;top:560px;width:35px;height:2px;background:#76b9ed"></div>
<!-- tray -->
<svg class="a" style="left:778px;top:539px" width="17" height="16"><circle cx="7" cy="7.5" r="6.5" fill="#f8c030"/><path d="M6 14c-2 0-3-1-3-2.5S4 9 5.5 9c.5-2 3-3 5-2 1.5-1 4 0 4 2.5 1.5 0 2 1.5 2 2.5S15 14 14 14z" fill="#b8d8f0"/></svg>
<div class="t" style="left:800px;top:541.5px;font-size:10.8px;color:#fff;letter-spacing:-0.4px">28°C</div>
<svg class="a" style="left:834px;top:543px" width="10" height="7"><path d="M1 6l4-4.5L9 6" stroke="#fff" stroke-width="1.2" fill="none"/></svg>
<svg class="a" style="left:850px;top:540px" width="14" height="14"><rect x="1" y="2" width="11" height="9" fill="none" stroke="#ddd" stroke-width="1.1"/><path d="M3 9l3-3M5 8h2" stroke="#ddd"/><circle cx="10.5" cy="11.5" r="2.3" fill="#e81123"/></svg>
<svg class="a" style="left:867px;top:541px" width="14" height="14"><path d="M1 4h2l3-3v11L3 9H1z" fill="none" stroke="#ddd" stroke-width="1"/><circle cx="10" cy="9.5" r="3" fill="#e81123"/><path d="M8.7 8.2l2.6 2.6M11.3 8.2l-2.6 2.6" stroke="#fff" stroke-width=".8"/></svg>
<div class="t" style="left:887px;top:542px;font-size:9.6px;color:#fff;letter-spacing:-0.3px">ENG</div>
<div class="t" style="left:924px;top:535.5px;font-size:9.6px;color:#fff;letter-spacing:-0.3px">12:55</div>
<div class="t" style="left:913px;top:548.5px;font-size:9.6px;color:#fff;letter-spacing:-0.45px">14-02-2022</div>
<svg class="a" style="left:968px;top:540px" width="14" height="13"><path d="M.5.5h12v9H8l-2 2-2-2H.5z" fill="none" stroke="#eee" stroke-width="1"/></svg>
<div class="a" style="left:995px;top:533px;width:1px;height:29px;background:#505a6a"></div>
<div class="a" style="left:536px;top:82px;width:409px;height:308px;background:rgba(0,0,0,0.06)"></div>
<div class="a" style="left:537px;top:83px;width:407px;height:306px;background:#f0f0f0;border:1px solid #8f8f8f"></div>
<div class="a" style="left:538px;top:84px;width:405px;height:22px;background:#fff"></div>
<svg class="a" style="left:543px;top:89px" width="12" height="12" viewBox="0 0 12 12"><defs><linearGradient id="LGd" x1="0" x2="1"><stop offset="0" stop-color="#1a1a1a"/><stop offset=".55" stop-color="#8a9090"/><stop offset="1" stop-color="#c8cccc"/></linearGradient></defs><rect width="12" height="12" fill="url(#LGd)"/><path d="M6 2 L9.5 12 L12 12 L12 2Z" fill="#d8dcdc" opacity=".6"/><path d="M1.5 12 C2.5 7 4 3.5 6.5 1.5 L8 2 C6 4 4.5 8 3.8 12Z" fill="#0a0a0a"/><rect width="12" height="12" fill="none" stroke="#111" stroke-width=".8"/></svg>
<div class="t" style="left:559px;top:90px;font-size:10.5px;color:#111;letter-spacing:-0.2px">Save 3D</div>
<svg class="a" style="left:928px;top:90px" width="10" height="10"><path d="M1 1l8 8M9 1L1 9" stroke="#222" stroke-width="1"/></svg>
<!-- save in -->
<div class="t" style="left:576px;top:114.5px;font-size:9.2px;color:#111;letter-spacing:-0.3px">Save in:</div>
<div class="a" style="left:610px;top:111px;width:191px;height:17px;background:#fff;border:1px solid #7a7a7a"></div>
<svg class="a" style="left:614px;top:114px" width="14" height="11"><rect x="0" y="0" width="13" height="9" fill="#1e90e8"/><rect x="0" y="8" width="13" height="1.5" fill="#0a60b0"/><path d="M2 8L10 1" stroke="#5ab8ff" stroke-width=".6"/></svg>
<div class="t" style="left:629px;top:114.5px;font-size:9.2px;color:#111;letter-spacing:-0.3px">Desktop</div>
<svg class="a" style="left:790px;top:117px" width="9" height="6"><path d="M1 1l3.5 3.5L8 1" stroke="#555" stroke-width="1" fill="none"/></svg>
<svg class="a" style="left:810px;top:112px" width="70" height="15">
<circle cx="7.5" cy="7.5" r="5.5" fill="#555"/><circle cx="7.5" cy="6.5" r="4.5" fill="#8a8a8a"/><path d="M10 7.5H5M7 5l-2.5 2.5L7 10" stroke="#fff" stroke-width="1.3" fill="none"/>
<path d="M18 6h3l1 1h5v7h-9z" fill="#e8c860" stroke="#b89030" stroke-width=".5"/><path d="M24 12V4M21.5 6.5L24 3l2.5 3.5" stroke="#2a9a2a" stroke-width="2" fill="none"/>
<path d="M35 6h4l1 1h6v7H35z" fill="#f0d070" stroke="#c8a040" stroke-width=".5"/><circle cx="45" cy="5" r="2.2" fill="#f05020"/>
<rect x="53.5" y="2.5" width="12" height="10" fill="#fff" stroke="#2060c0"/><rect x="53.5" y="2.5" width="12" height="2" fill="#2060c0"/><g fill="#2060c0"><rect x="56" y="6" width="1.5" height="1.5"/><rect x="59" y="6" width="1.5" height="1.5"/><rect x="62" y="6" width="1.5" height="1.5"/></g><g fill="#e04040"><rect x="56" y="9" width="1.5" height="1.5"/></g><g fill="#40a040"><rect x="59" y="9" width="1.5" height="1.5"/></g><g fill="#e0a020"><rect x="62" y="9" width="1.5" height="1.5"/></g>
<path d="M66 6h5l-2.5 3z" fill="#222"/>
</svg>
<!-- places bar -->
<div class="a" style="left:542px;top:132px;width:63px;height:248px;background:#f4f4f4"></div>
<svg class="a" style="left:542px;top:132px" width="63" height="248">
<g transform="rotate(12 32 17)"><path d="M32 7l2.8 6.5 6.8.6-5.2 4.5 1.6 6.8-6-3.6-6 3.6 1.6-6.8-5.2-4.5 6.8-.6z" fill="#2a9ae8"/></g><path d="M19 13l6 -1M17 17l6-1M20 21l4-.5" stroke="#8ac8f0" stroke-width=".8"/>
<rect x="21" y="53" width="21" height="14" fill="#1e90e8"/><rect x="21" y="66" width="21" height="2" fill="#0a5aa0"/><path d="M23 66L38 54" stroke="#6ac0ff" stroke-width=".5"/>
<path d="M21 97h8l2 2h11v13H21z" fill="#f0c040"/><rect x="21" y="101" width="21" height="10" fill="#f8d050"/><rect x="28" y="105" width="7" height="6" fill="#2a80d0"/>
<path d="M27 138.5l15 3.5v11l-15-3.5z" fill="#3aa8f0" stroke="#1a6aaa" stroke-width=".7"/><path d="M28 140l13 3v1l-13-3z" fill="#7ac8ff" opacity=".6"/><path d="M21 152l13-1 4 6-13 1.5z" fill="#d8d8d8" stroke="#aaa" stroke-width=".4"/><path d="M23 154h12M24 156h12" stroke="#aaa" stroke-width=".4"/>
<circle cx="34" cy="189" r="7" fill="#3a8ac8"/><path d="M28 186c4 2 8 1 12 0M34 182v14" stroke="#7ac0e8" stroke-width="1"/><path d="M21 188l11 3v9l-11-3z" fill="#2a9ae8" stroke="#1a5a9a" stroke-width=".5"/><path d="M23 200l9 2-2 2-8-2z" fill="#bbb"/>
</svg>
<div class="t" style="left:548px;top:162px;font-size:9.6px;color:#111;letter-spacing:-0.3px">Quick access</div>
<div class="t" style="left:558px;top:206px;font-size:9.6px;color:#111;letter-spacing:-0.3px">Desktop</div>
<div class="t" style="left:557px;top:249.5px;font-size:9.6px;color:#111;letter-spacing:-0.3px">Libraries</div>
<div class="t" style="left:560px;top:293.5px;font-size:9.6px;color:#111;letter-spacing:-0.3px">This PC</div>
<div class="t" style="left:557px;top:337px;font-size:9.6px;color:#111;letter-spacing:-0.3px">Network</div>
<!-- file list -->
<div class="a" style="left:610px;top:132px;width:329px;height:162px;background:#fff"></div>
<svg class="a" style="left:626px;top:144px" width="50" height="64">
<path d="M2 1h36v12H2z" fill="#f2cb62"/>
<path d="M21 6l26 3-1 48-11 2-15-3z" fill="#8ba7bd"/>
<path d="M40 14l7-5-1 48-9 2z" fill="#5d7b93"/>
<path d="M8 3l19 3 8 8-1 47-20-1z" fill="#f6f6f6" stroke="#d8d8d8" stroke-width=".5"/>
<path d="M27 6l0 7 7 0" fill="#e8e8e8" stroke="#ccc" stroke-width=".5"/>
<path d="M2 1l13 9v51L2 52z" fill="#f7d77a"/>
<path d="M2 1l13 9v3L2 4z" fill="#fbe49a"/>
</svg>
<div class="t" style="left:630px;top:210.5px;font-size:9.8px;color:#111;letter-spacing:-0.2px;transform:scaleX(0.8);transform-origin:0 0">SCHEDULE</div>
<!-- bottom fields -->
<div class="t" style="left:611px;top:307.5px;font-size:9.2px;color:#111;letter-spacing:-0.3px">Export:</div>
<div class="t" style="left:611px;top:327.5px;font-size:9.2px;color:#111;letter-spacing:-0.3px">Translator:</div>
<div class="t" style="left:611px;top:350.5px;font-size:9.2px;color:#111;letter-spacing:-0.3px">File name:</div>
<div class="t" style="left:611px;top:369.5px;font-size:9.2px;color:#111;letter-spacing:-0.3px">Save as type:</div>
<div class="a" style="left:680px;top:303px;width:181px;height:18px;background:#fff;border:1px solid #7a7a7a"></div>
<div class="a" style="left:680px;top:323px;width:181px;height:17px;background:#fff;border:1px solid #7a7a7a"></div>
<div class="a" style="left:680px;top:346px;width:181px;height:17px;background:#fff;border:1px solid #7a7a7a"></div>
<div class="a" style="left:680px;top:365px;width:181px;height:18px;background:#e5f1fb;border:1px solid #0078d7"></div>
<div class="t" style="left:683px;top:307.5px;font-size:9.2px;color:#111;letter-spacing:-0.3px">Entire project</div>
<div class="t" style="left:683px;top:350.5px;font-size:9.2px;color:#111;letter-spacing:-0.3px">Untitled</div>
<div class="t" style="left:683px;top:369.5px;font-size:9.2px;color:#111;letter-spacing:-0.35px">IFC 2x3 compressed file (*.ifczip)</div>
<svg class="a" style="left:848px;top:309px" width="9" height="6"><path d="M1 1l3.5 3.5L8 1" stroke="#555" stroke-width="1" fill="none"/></svg>
<svg class="a" style="left:848px;top:329px" width="9" height="6"><path d="M1 1l3.5 3.5L8 1" stroke="#555" stroke-width="1" fill="none"/></svg>
<svg class="a" style="left:848px;top:352px" width="9" height="6"><path d="M1 1l3.5 3.5L8 1" stroke="#555" stroke-width="1" fill="none"/></svg>
<svg class="a" style="left:848px;top:371px" width="9" height="6"><path d="M1 1l3.5 3.5L8 1" stroke="#555" stroke-width="1" fill="none"/></svg>
<div class="a" style="left:863px;top:303px;width:76px;height:16px;background:#e1e1e1;border:1px solid #adadad"></div>
<div class="a" style="left:863px;top:323px;width:76px;height:16px;background:#e1e1e1;border:1px solid #adadad"></div>
<div class="a" style="left:885px;top:347px;width:54px;height:15px;background:#e1e1e1;border:2px solid #0078d7"></div>
<div class="a" style="left:885px;top:366px;width:54px;height:16px;background:#e1e1e1;border:1px solid #adadad"></div>
<div class="t" style="left:875px;top:307px;font-size:9.2px;color:#111;letter-spacing:-0.3px">Model Filter...</div>
<div class="t" style="left:881px;top:327px;font-size:9.2px;color:#111;letter-spacing:-0.3px">Settings...</div>
<div class="t" style="left:902px;top:350.5px;font-size:9.2px;color:#111;letter-spacing:-0.3px">Save</div>
<div class="t" style="left:898px;top:369.5px;font-size:9.2px;color:#111;letter-spacing:-0.3px">Cancel</div>
<svg class="a" style="left:934px;top:379px" width="8" height="7"><g fill="#a0a0a0"><rect x="6" y="0" width="1" height="1"/><rect x="4" y="2" width="1" height="1"/><rect x="6" y="2" width="1" height="1"/><rect x="2" y="4" width="1" height="1"/><rect x="4" y="4" width="1" height="1"/><rect x="6" y="4" width="1" height="1"/></g></svg>
</body></html>
